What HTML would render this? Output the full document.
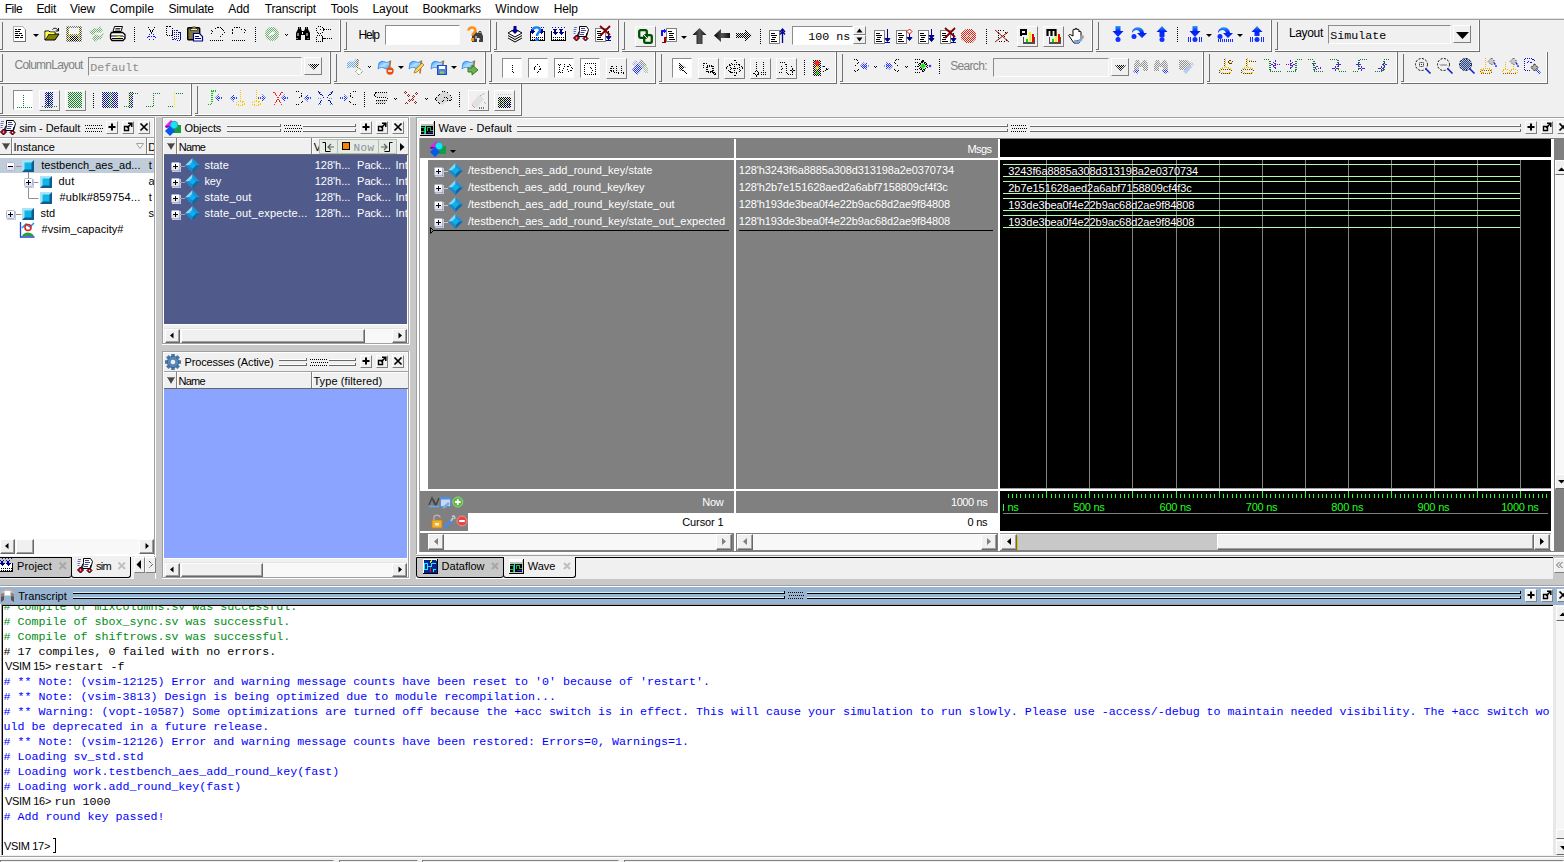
<!DOCTYPE html>
<html><head><meta charset="utf-8"><title>ModelSim</title><style>
html,body{margin:0;padding:0}
body{width:1564px;height:862px;overflow:hidden;background:#f0f0f0;position:relative;font-family:"Liberation Sans",sans-serif;font-size:11px}
.a{position:absolute;box-sizing:border-box}
.t{position:absolute;white-space:pre;line-height:1}
svg{position:absolute;overflow:visible}
</style></head><body>
<div class="a" style="left:0px;top:0px;width:1564px;height:18px;background:#fff;"></div>
<div class="a" style="left:0px;top:18px;width:1564px;height:1px;background:#e3e3e3;"></div>
<div class="a" style="left:0px;top:19px;width:1564px;height:1px;background:#a0a0a0;"></div>
<span class="t" style="left:4.8px;top:2.84px;font-size:12px;color:#000;font-family:'Liberation Sans', sans-serif;letter-spacing:-0.511px;">File</span>
<span class="t" style="left:36.4px;top:2.84px;font-size:12px;color:#000;font-family:'Liberation Sans', sans-serif;letter-spacing:-0.272px;">Edit</span>
<span class="t" style="left:70px;top:2.84px;font-size:12px;color:#000;font-family:'Liberation Sans', sans-serif;letter-spacing:-0.199px;">View</span>
<span class="t" style="left:109.7px;top:2.84px;font-size:12px;color:#000;font-family:'Liberation Sans', sans-serif;letter-spacing:0.041px;">Compile</span>
<span class="t" style="left:168.4px;top:2.84px;font-size:12px;color:#000;font-family:'Liberation Sans', sans-serif;letter-spacing:-0.148px;">Simulate</span>
<span class="t" style="left:228.3px;top:2.84px;font-size:12px;color:#000;font-family:'Liberation Sans', sans-serif;letter-spacing:-0.086px;">Add</span>
<span class="t" style="left:264.7px;top:2.84px;font-size:12px;color:#000;font-family:'Liberation Sans', sans-serif;letter-spacing:-0.171px;">Transcript</span>
<span class="t" style="left:330.7px;top:2.84px;font-size:12px;color:#000;font-family:'Liberation Sans', sans-serif;letter-spacing:-0.123px;">Tools</span>
<span class="t" style="left:372.5px;top:2.84px;font-size:12px;color:#000;font-family:'Liberation Sans', sans-serif;letter-spacing:-0.089px;">Layout</span>
<span class="t" style="left:422.4px;top:2.84px;font-size:12px;color:#000;font-family:'Liberation Sans', sans-serif;letter-spacing:-0.170px;">Bookmarks</span>
<span class="t" style="left:495.3px;top:2.84px;font-size:12px;color:#000;font-family:'Liberation Sans', sans-serif;letter-spacing:0.135px;">Window</span>
<span class="t" style="left:553.8px;top:2.84px;font-size:12px;color:#000;font-family:'Liberation Sans', sans-serif;letter-spacing:-0.197px;">Help</span>
<div class="a" style="left:339px;top:20px;width:1px;height:31px;background:#fff;"></div>
<div class="a" style="left:0px;top:50px;width:340px;height:1px;background:#fff;"></div>
<div class="a" style="left:340px;top:20px;width:1px;height:32px;background:#707070;"></div>
<div class="a" style="left:0px;top:51px;width:340px;height:1px;background:#707070;"></div>
<div class="a" style="left:2px;top:22px;width:1px;height:28px;background:#707070;"></div>
<div class="a" style="left:0px;top:49px;width:3px;height:1px;background:#707070;"></div>
<div class="a" style="left:489px;top:20px;width:1px;height:31px;background:#fff;"></div>
<div class="a" style="left:344px;top:50px;width:146px;height:1px;background:#fff;"></div>
<div class="a" style="left:490px;top:20px;width:1px;height:32px;background:#707070;"></div>
<div class="a" style="left:344px;top:51px;width:146px;height:1px;background:#707070;"></div>
<div class="a" style="left:346px;top:22px;width:1px;height:28px;background:#707070;"></div>
<div class="a" style="left:344px;top:49px;width:3px;height:1px;background:#707070;"></div>
<div class="a" style="left:617px;top:20px;width:1px;height:31px;background:#fff;"></div>
<div class="a" style="left:494px;top:50px;width:124px;height:1px;background:#fff;"></div>
<div class="a" style="left:618px;top:20px;width:1px;height:32px;background:#707070;"></div>
<div class="a" style="left:494px;top:51px;width:124px;height:1px;background:#707070;"></div>
<div class="a" style="left:496px;top:22px;width:1px;height:28px;background:#707070;"></div>
<div class="a" style="left:494px;top:49px;width:3px;height:1px;background:#707070;"></div>
<div class="a" style="left:1091px;top:20px;width:1px;height:31px;background:#fff;"></div>
<div class="a" style="left:622px;top:50px;width:470px;height:1px;background:#fff;"></div>
<div class="a" style="left:1092px;top:20px;width:1px;height:32px;background:#707070;"></div>
<div class="a" style="left:622px;top:51px;width:470px;height:1px;background:#707070;"></div>
<div class="a" style="left:624px;top:22px;width:1px;height:28px;background:#707070;"></div>
<div class="a" style="left:622px;top:49px;width:3px;height:1px;background:#707070;"></div>
<div class="a" style="left:1270px;top:20px;width:1px;height:31px;background:#fff;"></div>
<div class="a" style="left:1096px;top:50px;width:175px;height:1px;background:#fff;"></div>
<div class="a" style="left:1271px;top:20px;width:1px;height:32px;background:#707070;"></div>
<div class="a" style="left:1096px;top:51px;width:175px;height:1px;background:#707070;"></div>
<div class="a" style="left:1098px;top:22px;width:1px;height:28px;background:#707070;"></div>
<div class="a" style="left:1096px;top:49px;width:3px;height:1px;background:#707070;"></div>
<div class="a" style="left:1478px;top:20px;width:1px;height:31px;background:#fff;"></div>
<div class="a" style="left:1275px;top:50px;width:204px;height:1px;background:#fff;"></div>
<div class="a" style="left:1479px;top:20px;width:1px;height:32px;background:#707070;"></div>
<div class="a" style="left:1275px;top:51px;width:204px;height:1px;background:#707070;"></div>
<div class="a" style="left:1277px;top:22px;width:1px;height:28px;background:#707070;"></div>
<div class="a" style="left:1275px;top:49px;width:3px;height:1px;background:#707070;"></div>
<div class="a" style="left:329px;top:52px;width:1px;height:31px;background:#fff;"></div>
<div class="a" style="left:0px;top:82px;width:330px;height:1px;background:#fff;"></div>
<div class="a" style="left:330px;top:52px;width:1px;height:32px;background:#707070;"></div>
<div class="a" style="left:0px;top:83px;width:330px;height:1px;background:#707070;"></div>
<div class="a" style="left:2px;top:54px;width:1px;height:28px;background:#707070;"></div>
<div class="a" style="left:0px;top:81px;width:3px;height:1px;background:#707070;"></div>
<div class="a" style="left:484px;top:52px;width:1px;height:31px;background:#fff;"></div>
<div class="a" style="left:334px;top:82px;width:151px;height:1px;background:#fff;"></div>
<div class="a" style="left:485px;top:52px;width:1px;height:32px;background:#707070;"></div>
<div class="a" style="left:334px;top:83px;width:151px;height:1px;background:#707070;"></div>
<div class="a" style="left:336px;top:54px;width:1px;height:28px;background:#707070;"></div>
<div class="a" style="left:334px;top:81px;width:3px;height:1px;background:#707070;"></div>
<div class="a" style="left:654px;top:52px;width:1px;height:31px;background:#fff;"></div>
<div class="a" style="left:489px;top:82px;width:166px;height:1px;background:#fff;"></div>
<div class="a" style="left:655px;top:52px;width:1px;height:32px;background:#707070;"></div>
<div class="a" style="left:489px;top:83px;width:166px;height:1px;background:#707070;"></div>
<div class="a" style="left:491px;top:54px;width:1px;height:28px;background:#707070;"></div>
<div class="a" style="left:489px;top:81px;width:3px;height:1px;background:#707070;"></div>
<div class="a" style="left:835px;top:52px;width:1px;height:31px;background:#fff;"></div>
<div class="a" style="left:659px;top:82px;width:177px;height:1px;background:#fff;"></div>
<div class="a" style="left:836px;top:52px;width:1px;height:32px;background:#707070;"></div>
<div class="a" style="left:659px;top:83px;width:177px;height:1px;background:#707070;"></div>
<div class="a" style="left:661px;top:54px;width:1px;height:28px;background:#707070;"></div>
<div class="a" style="left:659px;top:81px;width:3px;height:1px;background:#707070;"></div>
<div class="a" style="left:1202px;top:52px;width:1px;height:31px;background:#fff;"></div>
<div class="a" style="left:840px;top:82px;width:363px;height:1px;background:#fff;"></div>
<div class="a" style="left:1203px;top:52px;width:1px;height:32px;background:#707070;"></div>
<div class="a" style="left:840px;top:83px;width:363px;height:1px;background:#707070;"></div>
<div class="a" style="left:842px;top:54px;width:1px;height:28px;background:#707070;"></div>
<div class="a" style="left:840px;top:81px;width:3px;height:1px;background:#707070;"></div>
<div class="a" style="left:1396px;top:52px;width:1px;height:31px;background:#fff;"></div>
<div class="a" style="left:1207px;top:82px;width:190px;height:1px;background:#fff;"></div>
<div class="a" style="left:1397px;top:52px;width:1px;height:32px;background:#707070;"></div>
<div class="a" style="left:1207px;top:83px;width:190px;height:1px;background:#707070;"></div>
<div class="a" style="left:1209px;top:54px;width:1px;height:28px;background:#707070;"></div>
<div class="a" style="left:1207px;top:81px;width:3px;height:1px;background:#707070;"></div>
<div class="a" style="left:1546px;top:52px;width:1px;height:31px;background:#fff;"></div>
<div class="a" style="left:1401px;top:82px;width:146px;height:1px;background:#fff;"></div>
<div class="a" style="left:1547px;top:52px;width:1px;height:32px;background:#707070;"></div>
<div class="a" style="left:1401px;top:83px;width:146px;height:1px;background:#707070;"></div>
<div class="a" style="left:1403px;top:54px;width:1px;height:28px;background:#707070;"></div>
<div class="a" style="left:1401px;top:81px;width:3px;height:1px;background:#707070;"></div>
<div class="a" style="left:190px;top:84px;width:1px;height:31px;background:#fff;"></div>
<div class="a" style="left:0px;top:114px;width:191px;height:1px;background:#fff;"></div>
<div class="a" style="left:191px;top:84px;width:1px;height:32px;background:#707070;"></div>
<div class="a" style="left:0px;top:115px;width:191px;height:1px;background:#707070;"></div>
<div class="a" style="left:2px;top:86px;width:1px;height:28px;background:#707070;"></div>
<div class="a" style="left:0px;top:113px;width:3px;height:1px;background:#707070;"></div>
<div class="a" style="left:520px;top:84px;width:1px;height:31px;background:#fff;"></div>
<div class="a" style="left:195px;top:114px;width:326px;height:1px;background:#fff;"></div>
<div class="a" style="left:521px;top:84px;width:1px;height:32px;background:#707070;"></div>
<div class="a" style="left:195px;top:115px;width:326px;height:1px;background:#707070;"></div>
<div class="a" style="left:197px;top:86px;width:1px;height:28px;background:#707070;"></div>
<div class="a" style="left:195px;top:113px;width:3px;height:1px;background:#707070;"></div>
<div class="a" style="left:0px;top:117px;width:1564px;height:470px;background:#c8c8c8;"></div>
<div class="a" style="left:-2px;top:117px;width:158px;height:462px;background:#f0f0f0;"></div>
<div class="a" style="left:-2px;top:117px;width:1px;height:462px;background:#a0a0a0;"></div>
<div class="a" style="left:-2px;top:117px;width:158px;height:1px;background:#a0a0a0;"></div>
<div class="a" style="left:-1px;top:118px;width:1px;height:461px;background:#fff;"></div>
<div class="a" style="left:-1px;top:118px;width:157px;height:1px;background:#fff;"></div>
<div class="a" style="left:153px;top:118px;width:1px;height:461px;background:#fff;"></div>
<div class="a" style="left:154px;top:118px;width:1px;height:461px;background:#a0a0a0;"></div>
<div class="a" style="left:155px;top:117px;width:1px;height:462px;background:#fff;"></div>
<div class="a" style="left:-1px;top:577px;width:156px;height:1px;background:#a0a0a0;"></div>
<div class="a" style="left:-2px;top:578px;width:158px;height:1px;background:#fff;"></div>
<div class="a" style="left:0px;top:138px;width:154px;height:418px;background:#fff;"></div>
<div class="a" style="left:162px;top:117px;width:248px;height:228px;background:#f0f0f0;"></div>
<div class="a" style="left:162px;top:117px;width:1px;height:228px;background:#a0a0a0;"></div>
<div class="a" style="left:162px;top:117px;width:248px;height:1px;background:#a0a0a0;"></div>
<div class="a" style="left:163px;top:118px;width:1px;height:227px;background:#fff;"></div>
<div class="a" style="left:163px;top:118px;width:247px;height:1px;background:#fff;"></div>
<div class="a" style="left:407px;top:118px;width:1px;height:227px;background:#fff;"></div>
<div class="a" style="left:408px;top:118px;width:1px;height:227px;background:#a0a0a0;"></div>
<div class="a" style="left:409px;top:117px;width:1px;height:228px;background:#fff;"></div>
<div class="a" style="left:163px;top:343px;width:246px;height:1px;background:#a0a0a0;"></div>
<div class="a" style="left:162px;top:344px;width:248px;height:1px;background:#fff;"></div>
<span class="t" style="left:184.5px;top:122.69px;font-size:11px;color:#000;font-family:'Liberation Sans', sans-serif;letter-spacing:-0.071px;">Objects</span>
<div class="a" style="left:227px;top:125px;width:54px;height:1px;background:#fff;"></div>
<div class="a" style="left:227px;top:126px;width:54px;height:1px;background:#696969;"></div>
<div class="a" style="left:227px;top:130px;width:54px;height:1px;background:#fff;"></div>
<div class="a" style="left:227px;top:131px;width:54px;height:1px;background:#696969;"></div>
<div class="a" style="left:280px;top:124px;width:1px;height:3px;background:#696969;"></div>
<div class="a" style="left:280px;top:129px;width:1px;height:3px;background:#696969;"></div>
<svg style="left:0;top:0" width="1" height="1"><rect x="284" y="125" width="1" height="1" fill="#000"/><rect x="286" y="125" width="1" height="1" fill="#000"/><rect x="288" y="125" width="1" height="1" fill="#000"/><rect x="290" y="125" width="1" height="1" fill="#000"/><rect x="292" y="125" width="1" height="1" fill="#000"/><rect x="294" y="125" width="1" height="1" fill="#000"/><rect x="296" y="125" width="1" height="1" fill="#000"/><rect x="298" y="125" width="1" height="1" fill="#000"/><rect x="300" y="125" width="1" height="1" fill="#000"/><rect x="285" y="128" width="1" height="1" fill="#000"/><rect x="287" y="128" width="1" height="1" fill="#000"/><rect x="289" y="128" width="1" height="1" fill="#000"/><rect x="291" y="128" width="1" height="1" fill="#000"/><rect x="293" y="128" width="1" height="1" fill="#000"/><rect x="295" y="128" width="1" height="1" fill="#000"/><rect x="297" y="128" width="1" height="1" fill="#000"/><rect x="299" y="128" width="1" height="1" fill="#000"/><rect x="301" y="128" width="1" height="1" fill="#000"/><rect x="284" y="131" width="1" height="1" fill="#000"/><rect x="286" y="131" width="1" height="1" fill="#000"/><rect x="288" y="131" width="1" height="1" fill="#000"/><rect x="290" y="131" width="1" height="1" fill="#000"/><rect x="292" y="131" width="1" height="1" fill="#000"/><rect x="294" y="131" width="1" height="1" fill="#000"/><rect x="296" y="131" width="1" height="1" fill="#000"/><rect x="298" y="131" width="1" height="1" fill="#000"/><rect x="300" y="131" width="1" height="1" fill="#000"/></svg>
<div class="a" style="left:303px;top:125px;width:53px;height:1px;background:#fff;"></div>
<div class="a" style="left:303px;top:126px;width:53px;height:1px;background:#696969;"></div>
<div class="a" style="left:303px;top:130px;width:53px;height:1px;background:#fff;"></div>
<div class="a" style="left:303px;top:131px;width:53px;height:1px;background:#696969;"></div>
<div class="a" style="left:355px;top:124px;width:1px;height:3px;background:#696969;"></div>
<div class="a" style="left:355px;top:129px;width:1px;height:3px;background:#696969;"></div>
<div class="a" style="left:360px;top:121px;width:12px;height:13px;background:#f0f0f0;border-top:1px solid #fff;border-left:1px solid #fff;border-right:1px solid #808080;border-bottom:1px solid #808080;"></div>
<svg style="left:360px;top:121px" width="12" height="12" viewBox="0 0 12 12"><path d="M2.5 6h7M6 2.5v7" stroke="#000" stroke-width="2" fill="none"/></svg>
<div class="a" style="left:376px;top:121px;width:12px;height:13px;background:#f0f0f0;border-top:1px solid #fff;border-left:1px solid #fff;border-right:1px solid #808080;border-bottom:1px solid #808080;"></div>
<svg style="left:376px;top:121px" width="12" height="12" viewBox="0 0 12 12"><path d="M2.5 5.5h4v4h-4z" fill="none" stroke="#000" stroke-width="1.4"/><path d="M5 7l4.5-4.5M6 2.2h3.8v3.8" fill="none" stroke="#000" stroke-width="1.5"/></svg>
<div class="a" style="left:392px;top:121px;width:12px;height:13px;background:#f0f0f0;border-top:1px solid #fff;border-left:1px solid #fff;border-right:1px solid #808080;border-bottom:1px solid #808080;"></div>
<svg style="left:392px;top:121px" width="12" height="12" viewBox="0 0 12 12"><path d="M2.5 2.5l7 7M9.5 2.5l-7 7" stroke="#000" stroke-width="1.7" fill="none"/></svg>
<div class="a" style="left:164px;top:137px;width:244px;height:1px;background:#a0a0a0;"></div>
<div class="a" style="left:164px;top:138px;width:244px;height:16px;background:#f0f0f0;border-top:1px solid #fff;"></div>
<div class="a" style="left:164px;top:154px;width:244px;height:1px;background:#696969;"></div>
<div class="a" style="left:176px;top:138px;width:1px;height:16px;background:#808080;"></div>
<div class="a" style="left:177px;top:138px;width:1px;height:16px;background:#fff;"></div>
<div class="a" style="left:311px;top:138px;width:1px;height:16px;background:#808080;"></div>
<div class="a" style="left:312px;top:138px;width:1px;height:16px;background:#fff;"></div>
<svg style="left:167px;top:143px" width="8" height="7" viewBox="0 0 8 7"><path d="M0 0h8l-4 7z" fill="#484848"/><path d="M0 .5h8" stroke="#808080"/><path d="M0 1l3.500 6" stroke="#fff" stroke-width=".6" opacity=".7"/></svg>
<span class="t" style="left:178.7px;top:141.69px;font-size:11px;color:#000;font-family:'Liberation Sans', sans-serif;letter-spacing:-0.686px;">Name</span>
<span class="t" style="left:313.7px;top:141.69px;font-size:11px;color:#000;font-family:'Liberation Sans', sans-serif;letter-spacing:-2.344px;">V</span>
<div class="a" style="left:164px;top:155px;width:243px;height:169px;background:#505b8b;"></div>
<div class="a" style="left:164px;top:324px;width:244px;height:1px;background:#fff;"></div>
<div class="a" style="left:164px;top:328px;width:243px;height:1px;background:#e4e4e4;"></div>
<div class="a" style="left:165px;top:329px;width:242px;height:14px;background:#f8f8f8;"></div>
<div class="a" style="left:165px;top:329px;width:15px;height:14px;background:#f0f0f0;border-top:1px solid #fff;border-left:1px solid #fff;border-right:1px solid #696969;border-bottom:1px solid #696969;box-shadow:inset -1px -1px 0 #a0a0a0;"></div>
<div class="a" style="left:392px;top:329px;width:15px;height:14px;background:#f0f0f0;border-top:1px solid #fff;border-left:1px solid #fff;border-right:1px solid #696969;border-bottom:1px solid #696969;box-shadow:inset -1px -1px 0 #a0a0a0;"></div>
<svg style="left:0;top:0" width="1" height="1"><path d="M173.5 332.5v6l-3.5-3z" fill="#000"/><path d="M398.5 332.5v6l3.5-3z" fill="#000"/></svg>
<div class="a" style="left:181px;top:329px;width:184px;height:14px;background:#f0f0f0;border-top:1px solid #fff;border-left:1px solid #fff;border-right:1px solid #696969;border-bottom:1px solid #696969;box-shadow:inset -1px -1px 0 #a0a0a0;"></div>
<div class="a" style="left:319px;top:139px;width:78px;height:15px;background:#e4ece4;border:1px solid #b4bcb4;"></div>
<div class="a" style="left:337px;top:140px;width:1px;height:13px;background:#b4bcb4;"></div>
<div class="a" style="left:378px;top:140px;width:1px;height:13px;background:#b4bcb4;"></div>
<div class="a" style="left:342px;top:142px;width:8px;height:8px;background:#ff8000;border:1px solid #000;"></div>
<span class="t" style="left:353.5px;top:143.14px;font-size:11px;color:#8c8ca0;font-family:'Liberation Mono', monospace;letter-spacing:0.396px;">Now</span>
<svg style="left:0;top:0" width="1" height="1"><path d="M322.5 142.5h3v9h5" fill="none" stroke="#000"/><path d="M334 147h-6M331 144l-3 3 3 3" fill="none" stroke="#606060" stroke-width="1.2"/><path d="M392.5 142.5h-3v9h-5" fill="none" stroke="#000"/><path d="M381 147h6M384 144l3 3-3 3" fill="none" stroke="#606060" stroke-width="1.2"/><path d="M400 143v8l4.5-4z" fill="#000"/></svg>
<div class="a" style="left:162px;top:351px;width:248px;height:228px;background:#f0f0f0;"></div>
<div class="a" style="left:162px;top:351px;width:1px;height:228px;background:#a0a0a0;"></div>
<div class="a" style="left:162px;top:351px;width:248px;height:1px;background:#a0a0a0;"></div>
<div class="a" style="left:163px;top:352px;width:1px;height:227px;background:#fff;"></div>
<div class="a" style="left:163px;top:352px;width:247px;height:1px;background:#fff;"></div>
<div class="a" style="left:407px;top:352px;width:1px;height:227px;background:#fff;"></div>
<div class="a" style="left:408px;top:352px;width:1px;height:227px;background:#a0a0a0;"></div>
<div class="a" style="left:409px;top:351px;width:1px;height:228px;background:#fff;"></div>
<div class="a" style="left:163px;top:577px;width:246px;height:1px;background:#a0a0a0;"></div>
<div class="a" style="left:162px;top:578px;width:248px;height:1px;background:#fff;"></div>
<span class="t" style="left:184.5px;top:356.69px;font-size:11px;color:#000;font-family:'Liberation Sans', sans-serif;letter-spacing:-0.156px;">Processes (Active)</span>
<div class="a" style="left:279px;top:359px;width:28px;height:1px;background:#fff;"></div>
<div class="a" style="left:279px;top:360px;width:28px;height:1px;background:#696969;"></div>
<div class="a" style="left:279px;top:364px;width:28px;height:1px;background:#fff;"></div>
<div class="a" style="left:279px;top:365px;width:28px;height:1px;background:#696969;"></div>
<div class="a" style="left:306px;top:358px;width:1px;height:3px;background:#696969;"></div>
<div class="a" style="left:306px;top:363px;width:1px;height:3px;background:#696969;"></div>
<svg style="left:0;top:0" width="1" height="1"><rect x="310" y="359" width="1" height="1" fill="#000"/><rect x="312" y="359" width="1" height="1" fill="#000"/><rect x="314" y="359" width="1" height="1" fill="#000"/><rect x="316" y="359" width="1" height="1" fill="#000"/><rect x="318" y="359" width="1" height="1" fill="#000"/><rect x="320" y="359" width="1" height="1" fill="#000"/><rect x="322" y="359" width="1" height="1" fill="#000"/><rect x="324" y="359" width="1" height="1" fill="#000"/><rect x="326" y="359" width="1" height="1" fill="#000"/><rect x="311" y="362" width="1" height="1" fill="#000"/><rect x="313" y="362" width="1" height="1" fill="#000"/><rect x="315" y="362" width="1" height="1" fill="#000"/><rect x="317" y="362" width="1" height="1" fill="#000"/><rect x="319" y="362" width="1" height="1" fill="#000"/><rect x="321" y="362" width="1" height="1" fill="#000"/><rect x="323" y="362" width="1" height="1" fill="#000"/><rect x="325" y="362" width="1" height="1" fill="#000"/><rect x="327" y="362" width="1" height="1" fill="#000"/><rect x="310" y="365" width="1" height="1" fill="#000"/><rect x="312" y="365" width="1" height="1" fill="#000"/><rect x="314" y="365" width="1" height="1" fill="#000"/><rect x="316" y="365" width="1" height="1" fill="#000"/><rect x="318" y="365" width="1" height="1" fill="#000"/><rect x="320" y="365" width="1" height="1" fill="#000"/><rect x="322" y="365" width="1" height="1" fill="#000"/><rect x="324" y="365" width="1" height="1" fill="#000"/><rect x="326" y="365" width="1" height="1" fill="#000"/></svg>
<div class="a" style="left:329px;top:359px;width:27px;height:1px;background:#fff;"></div>
<div class="a" style="left:329px;top:360px;width:27px;height:1px;background:#696969;"></div>
<div class="a" style="left:329px;top:364px;width:27px;height:1px;background:#fff;"></div>
<div class="a" style="left:329px;top:365px;width:27px;height:1px;background:#696969;"></div>
<div class="a" style="left:355px;top:358px;width:1px;height:3px;background:#696969;"></div>
<div class="a" style="left:355px;top:363px;width:1px;height:3px;background:#696969;"></div>
<div class="a" style="left:360px;top:355px;width:12px;height:13px;background:#f0f0f0;border-top:1px solid #fff;border-left:1px solid #fff;border-right:1px solid #808080;border-bottom:1px solid #808080;"></div>
<svg style="left:360px;top:355px" width="12" height="12" viewBox="0 0 12 12"><path d="M2.5 6h7M6 2.5v7" stroke="#000" stroke-width="2" fill="none"/></svg>
<div class="a" style="left:376px;top:355px;width:12px;height:13px;background:#f0f0f0;border-top:1px solid #fff;border-left:1px solid #fff;border-right:1px solid #808080;border-bottom:1px solid #808080;"></div>
<svg style="left:376px;top:355px" width="12" height="12" viewBox="0 0 12 12"><path d="M2.5 5.5h4v4h-4z" fill="none" stroke="#000" stroke-width="1.4"/><path d="M5 7l4.5-4.5M6 2.2h3.8v3.8" fill="none" stroke="#000" stroke-width="1.5"/></svg>
<div class="a" style="left:392px;top:355px;width:12px;height:13px;background:#f0f0f0;border-top:1px solid #fff;border-left:1px solid #fff;border-right:1px solid #808080;border-bottom:1px solid #808080;"></div>
<svg style="left:392px;top:355px" width="12" height="12" viewBox="0 0 12 12"><path d="M2.5 2.5l7 7M9.5 2.5l-7 7" stroke="#000" stroke-width="1.7" fill="none"/></svg>
<div class="a" style="left:164px;top:371px;width:244px;height:1px;background:#a0a0a0;"></div>
<div class="a" style="left:164px;top:372px;width:244px;height:16px;background:#f0f0f0;border-top:1px solid #fff;"></div>
<div class="a" style="left:164px;top:388px;width:244px;height:1px;background:#696969;"></div>
<div class="a" style="left:176px;top:372px;width:1px;height:16px;background:#808080;"></div>
<div class="a" style="left:177px;top:372px;width:1px;height:16px;background:#fff;"></div>
<div class="a" style="left:311px;top:372px;width:1px;height:16px;background:#808080;"></div>
<div class="a" style="left:312px;top:372px;width:1px;height:16px;background:#fff;"></div>
<svg style="left:167px;top:377px" width="8" height="7" viewBox="0 0 8 7"><path d="M0 0h8l-4 7z" fill="#484848"/><path d="M0 .5h8" stroke="#808080"/><path d="M0 1l3.500 6" stroke="#fff" stroke-width=".6" opacity=".7"/></svg>
<span class="t" style="left:178.4px;top:375.69px;font-size:11px;color:#000;font-family:'Liberation Sans', sans-serif;letter-spacing:-0.686px;">Name</span>
<span class="t" style="left:313.4px;top:375.69px;font-size:11px;color:#000;font-family:'Liberation Sans', sans-serif;letter-spacing:0.103px;">Type (filtered)</span>
<div class="a" style="left:164px;top:389px;width:243px;height:169px;background:#8ba4ff;"></div>
<div class="a" style="left:164px;top:558px;width:244px;height:1px;background:#fff;"></div>
<div class="a" style="left:164px;top:562px;width:243px;height:1px;background:#e4e4e4;"></div>
<div class="a" style="left:165px;top:563px;width:242px;height:14px;background:#f8f8f8;"></div>
<div class="a" style="left:165px;top:563px;width:15px;height:14px;background:#f0f0f0;border-top:1px solid #fff;border-left:1px solid #fff;border-right:1px solid #696969;border-bottom:1px solid #696969;box-shadow:inset -1px -1px 0 #a0a0a0;"></div>
<div class="a" style="left:392px;top:563px;width:15px;height:14px;background:#f0f0f0;border-top:1px solid #fff;border-left:1px solid #fff;border-right:1px solid #696969;border-bottom:1px solid #696969;box-shadow:inset -1px -1px 0 #a0a0a0;"></div>
<svg style="left:0;top:0" width="1" height="1"><path d="M173.5 566.5v6l-3.5-3z" fill="#000"/><path d="M398.5 566.5v6l3.5-3z" fill="#000"/></svg>
<div class="a" style="left:181px;top:563px;width:82px;height:14px;background:#f0f0f0;border-top:1px solid #fff;border-left:1px solid #fff;border-right:1px solid #696969;border-bottom:1px solid #696969;box-shadow:inset -1px -1px 0 #a0a0a0;"></div>
<div class="a" style="left:416px;top:117px;width:1150px;height:439px;background:#f0f0f0;border:1px solid #a0a0a0;box-shadow:inset 1px 1px 0 #fff;"></div>
<span class="t" style="left:438.4px;top:122.69px;font-size:11px;color:#000;font-family:'Liberation Sans', sans-serif;letter-spacing:0.090px;">Wave - Default</span>
<div class="a" style="left:517px;top:125px;width:491px;height:1px;background:#fff;"></div>
<div class="a" style="left:517px;top:126px;width:491px;height:1px;background:#696969;"></div>
<div class="a" style="left:517px;top:130px;width:491px;height:1px;background:#fff;"></div>
<div class="a" style="left:517px;top:131px;width:491px;height:1px;background:#696969;"></div>
<div class="a" style="left:1007px;top:124px;width:1px;height:3px;background:#696969;"></div>
<div class="a" style="left:1007px;top:129px;width:1px;height:3px;background:#696969;"></div>
<svg style="left:0;top:0" width="1" height="1"><rect x="1011" y="125" width="1" height="1" fill="#000"/><rect x="1013" y="125" width="1" height="1" fill="#000"/><rect x="1015" y="125" width="1" height="1" fill="#000"/><rect x="1017" y="125" width="1" height="1" fill="#000"/><rect x="1019" y="125" width="1" height="1" fill="#000"/><rect x="1021" y="125" width="1" height="1" fill="#000"/><rect x="1023" y="125" width="1" height="1" fill="#000"/><rect x="1025" y="125" width="1" height="1" fill="#000"/><rect x="1012" y="128" width="1" height="1" fill="#000"/><rect x="1014" y="128" width="1" height="1" fill="#000"/><rect x="1016" y="128" width="1" height="1" fill="#000"/><rect x="1018" y="128" width="1" height="1" fill="#000"/><rect x="1020" y="128" width="1" height="1" fill="#000"/><rect x="1022" y="128" width="1" height="1" fill="#000"/><rect x="1024" y="128" width="1" height="1" fill="#000"/><rect x="1026" y="128" width="1" height="1" fill="#000"/><rect x="1011" y="131" width="1" height="1" fill="#000"/><rect x="1013" y="131" width="1" height="1" fill="#000"/><rect x="1015" y="131" width="1" height="1" fill="#000"/><rect x="1017" y="131" width="1" height="1" fill="#000"/><rect x="1019" y="131" width="1" height="1" fill="#000"/><rect x="1021" y="131" width="1" height="1" fill="#000"/><rect x="1023" y="131" width="1" height="1" fill="#000"/><rect x="1025" y="131" width="1" height="1" fill="#000"/></svg>
<div class="a" style="left:1030px;top:125px;width:491px;height:1px;background:#fff;"></div>
<div class="a" style="left:1030px;top:126px;width:491px;height:1px;background:#696969;"></div>
<div class="a" style="left:1030px;top:130px;width:491px;height:1px;background:#fff;"></div>
<div class="a" style="left:1030px;top:131px;width:491px;height:1px;background:#696969;"></div>
<div class="a" style="left:1520px;top:124px;width:1px;height:3px;background:#696969;"></div>
<div class="a" style="left:1520px;top:129px;width:1px;height:3px;background:#696969;"></div>
<div class="a" style="left:1525px;top:121px;width:12px;height:13px;background:#f0f0f0;border-top:1px solid #fff;border-left:1px solid #fff;border-right:1px solid #808080;border-bottom:1px solid #808080;"></div>
<svg style="left:1525px;top:121px" width="12" height="12" viewBox="0 0 12 12"><path d="M2.5 6h7M6 2.5v7" stroke="#000" stroke-width="2" fill="none"/></svg>
<div class="a" style="left:1541px;top:121px;width:12px;height:13px;background:#f0f0f0;border-top:1px solid #fff;border-left:1px solid #fff;border-right:1px solid #808080;border-bottom:1px solid #808080;"></div>
<svg style="left:1541px;top:121px" width="12" height="12" viewBox="0 0 12 12"><path d="M2.5 5.5h4v4h-4z" fill="none" stroke="#000" stroke-width="1.4"/><path d="M5 7l4.5-4.5M6 2.2h3.8v3.8" fill="none" stroke="#000" stroke-width="1.5"/></svg>
<div class="a" style="left:1557px;top:121px;width:12px;height:13px;background:#f0f0f0;border-top:1px solid #fff;border-left:1px solid #fff;border-right:1px solid #808080;border-bottom:1px solid #808080;"></div>
<svg style="left:1557px;top:121px" width="12" height="12" viewBox="0 0 12 12"><path d="M2.5 2.5l7 7M9.5 2.5l-7 7" stroke="#000" stroke-width="1.7" fill="none"/></svg>
<div class="a" style="left:417px;top:138px;width:1147px;height:416px;background:#fff;"></div>
<div class="a" style="left:419px;top:138px;width:1145px;height:414px;background:#808080;"></div>
<div class="a" style="left:419px;top:138px;width:1px;height:414px;background:#a0a0a0;"></div>
<div class="a" style="left:420px;top:158px;width:8px;height:331px;background:#fff;"></div>
<div class="a" style="left:734px;top:139px;width:2px;height:412px;background:#fff;"></div>
<div class="a" style="left:998px;top:139px;width:2px;height:412px;background:#fff;"></div>
<div class="a" style="left:1551px;top:139px;width:3px;height:412px;background:#fff;"></div>
<div class="a" style="left:420px;top:158px;width:1131px;height:2px;background:#fff;"></div>
<div class="a" style="left:420px;top:489px;width:1131px;height:2px;background:#fff;"></div>
<div class="a" style="left:420px;top:531px;width:1131px;height:2px;background:#fff;"></div>
<div class="a" style="left:1000px;top:157px;width:551px;height:1px;background:#fff;"></div>
<div class="a" style="left:1000px;top:139px;width:551px;height:18px;background:#000;"></div>
<div class="a" style="left:1000px;top:160px;width:551px;height:329px;background:#000;"></div>
<div class="a" style="left:1000px;top:491px;width:551px;height:40px;background:#000;"></div>
<span class="t" style="left:967.5px;top:143.69px;font-size:11px;color:#fff;font-family:'Liberation Sans', sans-serif;letter-spacing:-0.620px;">Msgs</span>
<svg style="left:0;top:0" width="1" height="1"><path d="M450 150h6l-3 3z" fill="#000"/></svg>
<svg style="left:0;top:0" width="1" height="1"><path d="M435 176.5h9M443.5 168v9" stroke="#c4c8e0" fill="none"/><rect x="434.5" y="167.5" width="8" height="8" rx="1" fill="#fff" stroke="#b0b4cc"/><rect x="435" y="172" width="7" height="3" fill="#e0e4f4"/><path d="M436 171.5h5" stroke="#000" stroke-width="1"/><path d="M438.5 169v5" stroke="#000" stroke-width="1"/><path d="M443 171.5h5" stroke="#c8c8c8"/><path d="M455.5 163.0L448.0 170.5L451.975 170.5L455.5 166.975z" fill="#84d6f8"/><path d="M455.5 163.0L463.0 170.5L459.025 170.5L455.5 166.975z" fill="#1d92da"/><path d="M455.5 178.0L448.0 170.5L451.975 170.5L455.5 174.025z" fill="#1a8ad0"/><path d="M455.5 178.0L463.0 170.5L459.025 170.5L455.5 174.025z" fill="#0f6aa4"/><path d="M455.5 166.975L459.025 170.5L455.5 174.025L451.975 170.5z" fill="#00b6f2"/><path d="M435 193.5h9M443.5 185v9" stroke="#c4c8e0" fill="none"/><rect x="434.5" y="184.5" width="8" height="8" rx="1" fill="#fff" stroke="#b0b4cc"/><rect x="435" y="189" width="7" height="3" fill="#e0e4f4"/><path d="M436 188.5h5" stroke="#000" stroke-width="1"/><path d="M438.5 186v5" stroke="#000" stroke-width="1"/><path d="M443 188.5h5" stroke="#c8c8c8"/><path d="M455.5 180.0L448.0 187.5L451.975 187.5L455.5 183.975z" fill="#84d6f8"/><path d="M455.5 180.0L463.0 187.5L459.025 187.5L455.5 183.975z" fill="#1d92da"/><path d="M455.5 195.0L448.0 187.5L451.975 187.5L455.5 191.025z" fill="#1a8ad0"/><path d="M455.5 195.0L463.0 187.5L459.025 187.5L455.5 191.025z" fill="#0f6aa4"/><path d="M455.5 183.975L459.025 187.5L455.5 191.025L451.975 187.5z" fill="#00b6f2"/><path d="M435 210.5h9M443.5 202v9" stroke="#c4c8e0" fill="none"/><rect x="434.5" y="201.5" width="8" height="8" rx="1" fill="#fff" stroke="#b0b4cc"/><rect x="435" y="206" width="7" height="3" fill="#e0e4f4"/><path d="M436 205.5h5" stroke="#000" stroke-width="1"/><path d="M438.5 203v5" stroke="#000" stroke-width="1"/><path d="M443 205.5h5" stroke="#c8c8c8"/><path d="M455.5 197.0L448.0 204.5L451.975 204.5L455.5 200.975z" fill="#84d6f8"/><path d="M455.5 197.0L463.0 204.5L459.025 204.5L455.5 200.975z" fill="#1d92da"/><path d="M455.5 212.0L448.0 204.5L451.975 204.5L455.5 208.025z" fill="#1a8ad0"/><path d="M455.5 212.0L463.0 204.5L459.025 204.5L455.5 208.025z" fill="#0f6aa4"/><path d="M455.5 200.975L459.025 204.5L455.5 208.025L451.975 204.5z" fill="#00b6f2"/><path d="M435 227.5h9M443.5 219v9" stroke="#c4c8e0" fill="none"/><rect x="434.5" y="218.5" width="8" height="8" rx="1" fill="#fff" stroke="#b0b4cc"/><rect x="435" y="223" width="7" height="3" fill="#e0e4f4"/><path d="M436 222.5h5" stroke="#000" stroke-width="1"/><path d="M438.5 220v5" stroke="#000" stroke-width="1"/><path d="M443 222.5h5" stroke="#c8c8c8"/><path d="M455.5 214.0L448.0 221.5L451.975 221.5L455.5 217.975z" fill="#84d6f8"/><path d="M455.5 214.0L463.0 221.5L459.025 221.5L455.5 217.975z" fill="#1d92da"/><path d="M455.5 229.0L448.0 221.5L451.975 221.5L455.5 225.025z" fill="#1a8ad0"/><path d="M455.5 229.0L463.0 221.5L459.025 221.5L455.5 225.025z" fill="#0f6aa4"/><path d="M455.5 217.975L459.025 221.5L455.5 225.025L451.975 221.5z" fill="#00b6f2"/></svg>
<span class="t" style="left:467.9px;top:164.69px;font-size:11px;color:#fff;font-family:'Liberation Sans', sans-serif;letter-spacing:0.030px;">/testbench_aes_add_round_key/state</span>
<span class="t" style="left:738.7px;top:164.69px;font-size:11px;color:#fff;font-family:'Liberation Sans', sans-serif;letter-spacing:-0.110px;">128&#x27;h3243f6a8885a308d313198a2e0370734</span>
<span class="t" style="left:467.9px;top:181.69px;font-size:11px;color:#fff;font-family:'Liberation Sans', sans-serif;letter-spacing:-0.008px;">/testbench_aes_add_round_key/key</span>
<span class="t" style="left:738.7px;top:181.69px;font-size:11px;color:#fff;font-family:'Liberation Sans', sans-serif;letter-spacing:-0.076px;">128&#x27;h2b7e151628aed2a6abf7158809cf4f3c</span>
<span class="t" style="left:467.9px;top:198.69px;font-size:11px;color:#fff;font-family:'Liberation Sans', sans-serif;letter-spacing:0.050px;">/testbench_aes_add_round_key/state_out</span>
<span class="t" style="left:738.7px;top:198.69px;font-size:11px;color:#fff;font-family:'Liberation Sans', sans-serif;letter-spacing:-0.114px;">128&#x27;h193de3bea0f4e22b9ac68d2ae9f84808</span>
<span class="t" style="left:467.9px;top:215.69px;font-size:11px;color:#fff;font-family:'Liberation Sans', sans-serif;letter-spacing:0.037px;">/testbench_aes_add_round_key/state_out_expected</span>
<span class="t" style="left:738.7px;top:215.69px;font-size:11px;color:#fff;font-family:'Liberation Sans', sans-serif;letter-spacing:-0.114px;">128&#x27;h193de3bea0f4e22b9ac68d2ae9f84808</span>
<div class="a" style="left:431px;top:230px;width:298px;height:1px;background:#000;"></div>
<div class="a" style="left:739px;top:230px;width:254px;height:1px;background:#000;"></div>
<svg style="left:0;top:0" width="1" height="1"><path d="M430.5 227.5l3 3-3 3z" fill="#808080" stroke="#000" stroke-width="1"/></svg>
<div class="a" style="left:1046px;top:160px;width:1px;height:329px;background:#828282;"></div>
<div class="a" style="left:1089px;top:160px;width:1px;height:329px;background:#828282;"></div>
<div class="a" style="left:1132px;top:160px;width:1px;height:329px;background:#828282;"></div>
<div class="a" style="left:1176px;top:160px;width:1px;height:329px;background:#828282;"></div>
<div class="a" style="left:1219px;top:160px;width:1px;height:329px;background:#828282;"></div>
<div class="a" style="left:1262px;top:160px;width:1px;height:329px;background:#828282;"></div>
<div class="a" style="left:1305px;top:160px;width:1px;height:329px;background:#828282;"></div>
<div class="a" style="left:1348px;top:160px;width:1px;height:329px;background:#828282;"></div>
<div class="a" style="left:1391px;top:160px;width:1px;height:329px;background:#828282;"></div>
<div class="a" style="left:1434px;top:160px;width:1px;height:329px;background:#828282;"></div>
<div class="a" style="left:1477px;top:160px;width:1px;height:329px;background:#828282;"></div>
<div class="a" style="left:1520px;top:160px;width:1px;height:329px;background:#828282;"></div>
<div class="a" style="left:1003px;top:164px;width:517px;height:1px;background:#b2ffb2;"></div>
<div class="a" style="left:1003px;top:176px;width:517px;height:1px;background:#b2ffb2;"></div>
<span class="t" style="left:1008.3px;top:165.69px;font-size:11px;color:#fff;font-family:'Liberation Sans', sans-serif;letter-spacing:-0.094px;">3243f6a8885a308d313198a2e0370734</span>
<div class="a" style="left:1003px;top:181px;width:517px;height:1px;background:#b2ffb2;"></div>
<div class="a" style="left:1003px;top:193px;width:517px;height:1px;background:#b2ffb2;"></div>
<span class="t" style="left:1008.3px;top:182.69px;font-size:11px;color:#fff;font-family:'Liberation Sans', sans-serif;letter-spacing:-0.058px;">2b7e151628aed2a6abf7158809cf4f3c</span>
<div class="a" style="left:1003px;top:198px;width:517px;height:1px;background:#b2ffb2;"></div>
<div class="a" style="left:1003px;top:210px;width:517px;height:1px;background:#b2ffb2;"></div>
<span class="t" style="left:1008.3px;top:199.69px;font-size:11px;color:#fff;font-family:'Liberation Sans', sans-serif;letter-spacing:-0.092px;">193de3bea0f4e22b9ac68d2ae9f84808</span>
<div class="a" style="left:1003px;top:215px;width:517px;height:1px;background:#b2ffb2;"></div>
<div class="a" style="left:1003px;top:227px;width:517px;height:1px;background:#b2ffb2;"></div>
<span class="t" style="left:1008.3px;top:216.69px;font-size:11px;color:#fff;font-family:'Liberation Sans', sans-serif;letter-spacing:-0.092px;">193de3bea0f4e22b9ac68d2ae9f84808</span>
<div class="a" style="left:1000px;top:488px;width:551px;height:1px;background:#a0a0a0;"></div>
<span class="t" style="right:840.6px;top:496.69px;font-size:11px;color:#fff;font-family:'Liberation Sans', sans-serif;letter-spacing:-0.305px;">Now</span>
<span class="t" style="right:576.7px;top:496.69px;font-size:11px;color:#fff;font-family:'Liberation Sans', sans-serif;letter-spacing:-0.394px;">1000 ns</span>
<div class="a" style="left:468px;top:513px;width:266px;height:18px;background:#fff;"></div>
<div class="a" style="left:736px;top:513px;width:262px;height:18px;background:#fff;"></div>
<span class="t" style="right:840.6px;top:516.69px;font-size:11px;color:#000;font-family:'Liberation Sans', sans-serif;letter-spacing:-0.136px;">Cursor 1</span>
<span class="t" style="right:576.7px;top:516.69px;font-size:11px;color:#000;font-family:'Liberation Sans', sans-serif;letter-spacing:-0.224px;">0 ns</span>
<svg style="left:0;top:0" width="1" height="1"><rect x="1008" y="494" width="1" height="4" fill="#22ff22"/><rect x="1012" y="494" width="1" height="4" fill="#22ff22"/><rect x="1016" y="494" width="1" height="4" fill="#22ff22"/><rect x="1020" y="494" width="1" height="4" fill="#22ff22"/><rect x="1025" y="494" width="1" height="4" fill="#22ff22"/><rect x="1029" y="494" width="1" height="4" fill="#22ff22"/><rect x="1033" y="494" width="1" height="4" fill="#22ff22"/><rect x="1038" y="494" width="1" height="4" fill="#22ff22"/><rect x="1042" y="494" width="1" height="4" fill="#22ff22"/><rect x="1046" y="491" width="1" height="7" fill="#22ff22"/><rect x="1051" y="494" width="1" height="4" fill="#22ff22"/><rect x="1055" y="494" width="1" height="4" fill="#22ff22"/><rect x="1059" y="494" width="1" height="4" fill="#22ff22"/><rect x="1064" y="494" width="1" height="4" fill="#22ff22"/><rect x="1068" y="494" width="1" height="4" fill="#22ff22"/><rect x="1072" y="494" width="1" height="4" fill="#22ff22"/><rect x="1076" y="494" width="1" height="4" fill="#22ff22"/><rect x="1081" y="494" width="1" height="4" fill="#22ff22"/><rect x="1085" y="494" width="1" height="4" fill="#22ff22"/><rect x="1089" y="491" width="1" height="7" fill="#22ff22"/><rect x="1094" y="494" width="1" height="4" fill="#22ff22"/><rect x="1098" y="494" width="1" height="4" fill="#22ff22"/><rect x="1102" y="494" width="1" height="4" fill="#22ff22"/><rect x="1107" y="494" width="1" height="4" fill="#22ff22"/><rect x="1111" y="494" width="1" height="4" fill="#22ff22"/><rect x="1115" y="494" width="1" height="4" fill="#22ff22"/><rect x="1120" y="494" width="1" height="4" fill="#22ff22"/><rect x="1124" y="494" width="1" height="4" fill="#22ff22"/><rect x="1128" y="494" width="1" height="4" fill="#22ff22"/><rect x="1132" y="491" width="1" height="7" fill="#22ff22"/><rect x="1137" y="494" width="1" height="4" fill="#22ff22"/><rect x="1141" y="494" width="1" height="4" fill="#22ff22"/><rect x="1145" y="494" width="1" height="4" fill="#22ff22"/><rect x="1150" y="494" width="1" height="4" fill="#22ff22"/><rect x="1154" y="494" width="1" height="4" fill="#22ff22"/><rect x="1158" y="494" width="1" height="4" fill="#22ff22"/><rect x="1163" y="494" width="1" height="4" fill="#22ff22"/><rect x="1167" y="494" width="1" height="4" fill="#22ff22"/><rect x="1171" y="494" width="1" height="4" fill="#22ff22"/><rect x="1176" y="491" width="1" height="7" fill="#22ff22"/><rect x="1180" y="494" width="1" height="4" fill="#22ff22"/><rect x="1184" y="494" width="1" height="4" fill="#22ff22"/><rect x="1189" y="494" width="1" height="4" fill="#22ff22"/><rect x="1193" y="494" width="1" height="4" fill="#22ff22"/><rect x="1197" y="494" width="1" height="4" fill="#22ff22"/><rect x="1201" y="494" width="1" height="4" fill="#22ff22"/><rect x="1206" y="494" width="1" height="4" fill="#22ff22"/><rect x="1210" y="494" width="1" height="4" fill="#22ff22"/><rect x="1214" y="494" width="1" height="4" fill="#22ff22"/><rect x="1219" y="491" width="1" height="7" fill="#22ff22"/><rect x="1223" y="494" width="1" height="4" fill="#22ff22"/><rect x="1227" y="494" width="1" height="4" fill="#22ff22"/><rect x="1232" y="494" width="1" height="4" fill="#22ff22"/><rect x="1236" y="494" width="1" height="4" fill="#22ff22"/><rect x="1240" y="494" width="1" height="4" fill="#22ff22"/><rect x="1245" y="494" width="1" height="4" fill="#22ff22"/><rect x="1249" y="494" width="1" height="4" fill="#22ff22"/><rect x="1253" y="494" width="1" height="4" fill="#22ff22"/><rect x="1257" y="494" width="1" height="4" fill="#22ff22"/><rect x="1262" y="491" width="1" height="7" fill="#22ff22"/><rect x="1266" y="494" width="1" height="4" fill="#22ff22"/><rect x="1270" y="494" width="1" height="4" fill="#22ff22"/><rect x="1275" y="494" width="1" height="4" fill="#22ff22"/><rect x="1279" y="494" width="1" height="4" fill="#22ff22"/><rect x="1283" y="494" width="1" height="4" fill="#22ff22"/><rect x="1288" y="494" width="1" height="4" fill="#22ff22"/><rect x="1292" y="494" width="1" height="4" fill="#22ff22"/><rect x="1296" y="494" width="1" height="4" fill="#22ff22"/><rect x="1301" y="494" width="1" height="4" fill="#22ff22"/><rect x="1305" y="491" width="1" height="7" fill="#22ff22"/><rect x="1309" y="494" width="1" height="4" fill="#22ff22"/><rect x="1313" y="494" width="1" height="4" fill="#22ff22"/><rect x="1318" y="494" width="1" height="4" fill="#22ff22"/><rect x="1322" y="494" width="1" height="4" fill="#22ff22"/><rect x="1326" y="494" width="1" height="4" fill="#22ff22"/><rect x="1331" y="494" width="1" height="4" fill="#22ff22"/><rect x="1335" y="494" width="1" height="4" fill="#22ff22"/><rect x="1339" y="494" width="1" height="4" fill="#22ff22"/><rect x="1344" y="494" width="1" height="4" fill="#22ff22"/><rect x="1348" y="491" width="1" height="7" fill="#22ff22"/><rect x="1352" y="494" width="1" height="4" fill="#22ff22"/><rect x="1357" y="494" width="1" height="4" fill="#22ff22"/><rect x="1361" y="494" width="1" height="4" fill="#22ff22"/><rect x="1365" y="494" width="1" height="4" fill="#22ff22"/><rect x="1369" y="494" width="1" height="4" fill="#22ff22"/><rect x="1374" y="494" width="1" height="4" fill="#22ff22"/><rect x="1378" y="494" width="1" height="4" fill="#22ff22"/><rect x="1382" y="494" width="1" height="4" fill="#22ff22"/><rect x="1387" y="494" width="1" height="4" fill="#22ff22"/><rect x="1391" y="491" width="1" height="7" fill="#22ff22"/><rect x="1395" y="494" width="1" height="4" fill="#22ff22"/><rect x="1400" y="494" width="1" height="4" fill="#22ff22"/><rect x="1404" y="494" width="1" height="4" fill="#22ff22"/><rect x="1408" y="494" width="1" height="4" fill="#22ff22"/><rect x="1413" y="494" width="1" height="4" fill="#22ff22"/><rect x="1417" y="494" width="1" height="4" fill="#22ff22"/><rect x="1421" y="494" width="1" height="4" fill="#22ff22"/><rect x="1426" y="494" width="1" height="4" fill="#22ff22"/><rect x="1430" y="494" width="1" height="4" fill="#22ff22"/><rect x="1434" y="491" width="1" height="7" fill="#22ff22"/><rect x="1438" y="494" width="1" height="4" fill="#22ff22"/><rect x="1443" y="494" width="1" height="4" fill="#22ff22"/><rect x="1447" y="494" width="1" height="4" fill="#22ff22"/><rect x="1451" y="494" width="1" height="4" fill="#22ff22"/><rect x="1456" y="494" width="1" height="4" fill="#22ff22"/><rect x="1460" y="494" width="1" height="4" fill="#22ff22"/><rect x="1464" y="494" width="1" height="4" fill="#22ff22"/><rect x="1469" y="494" width="1" height="4" fill="#22ff22"/><rect x="1473" y="494" width="1" height="4" fill="#22ff22"/><rect x="1477" y="491" width="1" height="7" fill="#22ff22"/><rect x="1482" y="494" width="1" height="4" fill="#22ff22"/><rect x="1486" y="494" width="1" height="4" fill="#22ff22"/><rect x="1490" y="494" width="1" height="4" fill="#22ff22"/><rect x="1494" y="494" width="1" height="4" fill="#22ff22"/><rect x="1499" y="494" width="1" height="4" fill="#22ff22"/><rect x="1503" y="494" width="1" height="4" fill="#22ff22"/><rect x="1507" y="494" width="1" height="4" fill="#22ff22"/><rect x="1512" y="494" width="1" height="4" fill="#22ff22"/><rect x="1516" y="494" width="1" height="4" fill="#22ff22"/><rect x="1520" y="491" width="1" height="7" fill="#22ff22"/><rect x="1525" y="494" width="1" height="4" fill="#22ff22"/><rect x="1529" y="494" width="1" height="4" fill="#22ff22"/><rect x="1533" y="494" width="1" height="4" fill="#22ff22"/><rect x="1538" y="494" width="1" height="4" fill="#22ff22"/><rect x="1542" y="494" width="1" height="4" fill="#22ff22"/><rect x="1546" y="494" width="1" height="4" fill="#22ff22"/></svg>
<span class="t" style="left:1073.2px;top:501.69px;font-size:11px;color:#22ff22;font-family:'Liberation Sans', sans-serif;letter-spacing:-0.305px;">500 ns</span>
<span class="t" style="left:1159.5px;top:501.69px;font-size:11px;color:#22ff22;font-family:'Liberation Sans', sans-serif;letter-spacing:-0.239px;">600 ns</span>
<span class="t" style="left:1245.8px;top:501.69px;font-size:11px;color:#22ff22;font-family:'Liberation Sans', sans-serif;letter-spacing:-0.255px;">700 ns</span>
<span class="t" style="left:1331.3px;top:501.69px;font-size:11px;color:#22ff22;font-family:'Liberation Sans', sans-serif;letter-spacing:-0.189px;">800 ns</span>
<span class="t" style="left:1417.5px;top:501.69px;font-size:11px;color:#22ff22;font-family:'Liberation Sans', sans-serif;letter-spacing:-0.189px;">900 ns</span>
<span class="t" style="left:1501.2px;top:501.69px;font-size:11px;color:#22ff22;font-family:'Liberation Sans', sans-serif;letter-spacing:-0.251px;">1000 ns</span>
<span class="t" style="left:1007.6px;top:501.69px;font-size:11px;color:#22ff22;font-family:'Liberation Sans', sans-serif;letter-spacing:-0.463px;">ns</span>
<div class="a" style="left:1003px;top:504px;width:1px;height:7px;background:#22ff22;"></div>
<div class="a" style="left:1003px;top:513px;width:545px;height:1px;background:#808080;"></div>
<div class="a" style="left:1000px;top:533px;width:551px;height:1px;background:#a0a0a0;"></div>
<div class="a" style="left:428px;top:534px;width:304px;height:16px;background:#f8f8f8;"></div>
<div class="a" style="left:428px;top:534px;width:16px;height:16px;background:#f0f0f0;border-top:1px solid #fff;border-left:1px solid #fff;border-right:1px solid #696969;border-bottom:1px solid #696969;box-shadow:inset -1px -1px 0 #a0a0a0;"></div>
<div class="a" style="left:716px;top:534px;width:16px;height:16px;background:#f0f0f0;border-top:1px solid #fff;border-left:1px solid #fff;border-right:1px solid #696969;border-bottom:1px solid #696969;box-shadow:inset -1px -1px 0 #a0a0a0;"></div>
<svg style="left:0;top:0" width="1" height="1"><path d="M438 538.0v7l-4-3.5z" fill="#808080"/><path d="M722 538.0v7l4-3.5z" fill="#808080"/></svg>
<div class="a" style="left:737px;top:534px;width:260px;height:16px;background:#f8f8f8;"></div>
<div class="a" style="left:737px;top:534px;width:16px;height:16px;background:#f0f0f0;border-top:1px solid #fff;border-left:1px solid #fff;border-right:1px solid #696969;border-bottom:1px solid #696969;box-shadow:inset -1px -1px 0 #a0a0a0;"></div>
<div class="a" style="left:981px;top:534px;width:16px;height:16px;background:#f0f0f0;border-top:1px solid #fff;border-left:1px solid #fff;border-right:1px solid #696969;border-bottom:1px solid #696969;box-shadow:inset -1px -1px 0 #a0a0a0;"></div>
<svg style="left:0;top:0" width="1" height="1"><path d="M747 538.0v7l-4-3.5z" fill="#808080"/><path d="M987 538.0v7l4-3.5z" fill="#808080"/></svg>
<div class="a" style="left:1000px;top:534px;width:551px;height:16px;background:#f0f0f0;"></div>
<div class="a" style="left:1001px;top:534px;width:549px;height:16px;background:#c8c8c8;"></div>
<div class="a" style="left:1001px;top:534px;width:16px;height:16px;background:#f0f0f0;border-top:1px solid #fff;border-left:1px solid #fff;border-right:1px solid #696969;border-bottom:1px solid #696969;box-shadow:inset -1px -1px 0 #a0a0a0;"></div>
<div class="a" style="left:1534px;top:534px;width:16px;height:16px;background:#f0f0f0;border-top:1px solid #fff;border-left:1px solid #fff;border-right:1px solid #696969;border-bottom:1px solid #696969;box-shadow:inset -1px -1px 0 #a0a0a0;"></div>
<svg style="left:0;top:0" width="1" height="1"><path d="M1011 538.0v7l-4-3.5z" fill="#000"/><path d="M1540 538.0v7l4-3.5z" fill="#000"/></svg>
<div class="a" style="left:1217px;top:534px;width:317px;height:16px;background:#f0f0f0;border-top:1px solid #fff;border-left:1px solid #fff;border-right:1px solid #696969;border-bottom:1px solid #696969;box-shadow:inset -1px -1px 0 #a0a0a0;"></div>
<div class="a" style="left:1017px;top:536px;width:1px;height:14px;background:#f0c000;"></div>
<div class="a" style="left:1554px;top:138px;width:10px;height:414px;background:#808080;"></div>
<div class="a" style="left:1555px;top:160px;width:9px;height:329px;background:#f8f8f8;"></div>
<div class="a" style="left:1555px;top:160px;width:12px;height:15px;background:#f0f0f0;border-top:1px solid #fff;border-left:1px solid #fff;border-bottom:1px solid #696969;"></div>
<div class="a" style="left:1555px;top:474px;width:12px;height:15px;background:#f0f0f0;border-top:1px solid #fff;border-left:1px solid #fff;border-bottom:1px solid #696969;"></div>
<svg style="left:0;top:0" width="1" height="1"><path d="M1558 171h7l-3.500-3.500z" fill="#000"/><path d="M1558 480h7l-3.500 3.500z" fill="#000"/></svg>
<div class="a" style="left:416px;top:554px;width:1150px;height:25px;background:#f0f0f0;"></div>
<div class="a" style="left:416px;top:555px;width:1150px;height:1px;background:#a0a0a0;"></div>
<div class="a" style="left:416px;top:578px;width:160px;height:1px;background:#fff;"></div>
<div class="a" style="left:416px;top:557px;width:88px;height:21px;background:#c8c8c8;border:1px solid #000;border-radius:0 0 3px 3px;"></div>
<div class="a" style="left:503px;top:557px;width:73px;height:21px;background:#f0f0f0;border:1px solid #000;border-top:none;border-radius:0 0 3px 3px;"></div>
<div class="a" style="left:576px;top:557px;width:977px;height:1px;background:#000;"></div>
<div class="a" style="left:1553px;top:556px;width:11px;height:23px;background:#c8c8c8;"></div>
<div class="a" style="left:1554px;top:558px;width:10px;height:15px;background:#f0f0f0;border-top:1px solid #fff;border-left:1px solid #fff;border-bottom:1px solid #808080;"></div>
<svg style="left:0;top:0" width="1" height="1"><path d="M1559.500 562l-3 3 3 3M1562.500 562l-3 3 3 3" fill="none" stroke="#404040" stroke-width=".8"/></svg>
<span class="t" style="left:441.6px;top:560.69px;font-size:11px;color:#000;font-family:'Liberation Sans', sans-serif;letter-spacing:0.025px;">Dataflow</span>
<span class="t" style="left:527.8px;top:560.69px;font-size:11px;color:#000;font-family:'Liberation Sans', sans-serif;letter-spacing:-0.055px;">Wave</span>
<svg style="left:0;top:0" width="1" height="1"><path d="M492 563l6 6M498 563l-6 6" stroke="#a8a8a8" stroke-width="2.200"/><path d="M564 563l6 6M570 563l-6 6" stroke="#c0c0c0" stroke-width="2.200"/></svg>
<div class="a" style="left:0px;top:585px;width:1564px;height:1px;background:#a0a0a0;"></div>
<div class="a" style="left:0px;top:586px;width:1564px;height:1px;background:#fff;"></div>
<div class="a" style="left:0px;top:587px;width:1564px;height:18px;background:#99b4d1;"></div>
<span class="t" style="left:18.3px;top:590.69px;font-size:11px;color:#000;font-family:'Liberation Sans', sans-serif;letter-spacing:0.000px;">Transcript</span>
<div class="a" style="left:73px;top:592px;width:712px;height:1px;background:#c8f0ff;"></div>
<div class="a" style="left:73px;top:593px;width:712px;height:1px;background:#000;"></div>
<div class="a" style="left:73px;top:597px;width:712px;height:1px;background:#c8f0ff;"></div>
<div class="a" style="left:73px;top:598px;width:712px;height:1px;background:#000;"></div>
<div class="a" style="left:784px;top:591px;width:1px;height:3px;background:#000;"></div>
<div class="a" style="left:784px;top:596px;width:1px;height:3px;background:#000;"></div>
<svg style="left:0;top:0" width="1" height="1"><rect x="788" y="592" width="1" height="1" fill="#000"/><rect x="790" y="592" width="1" height="1" fill="#000"/><rect x="792" y="592" width="1" height="1" fill="#000"/><rect x="794" y="592" width="1" height="1" fill="#000"/><rect x="796" y="592" width="1" height="1" fill="#000"/><rect x="798" y="592" width="1" height="1" fill="#000"/><rect x="800" y="592" width="1" height="1" fill="#000"/><rect x="802" y="592" width="1" height="1" fill="#000"/><rect x="789" y="595" width="1" height="1" fill="#000"/><rect x="791" y="595" width="1" height="1" fill="#000"/><rect x="793" y="595" width="1" height="1" fill="#000"/><rect x="795" y="595" width="1" height="1" fill="#000"/><rect x="797" y="595" width="1" height="1" fill="#000"/><rect x="799" y="595" width="1" height="1" fill="#000"/><rect x="801" y="595" width="1" height="1" fill="#000"/><rect x="803" y="595" width="1" height="1" fill="#000"/><rect x="788" y="598" width="1" height="1" fill="#000"/><rect x="790" y="598" width="1" height="1" fill="#000"/><rect x="792" y="598" width="1" height="1" fill="#000"/><rect x="794" y="598" width="1" height="1" fill="#000"/><rect x="796" y="598" width="1" height="1" fill="#000"/><rect x="798" y="598" width="1" height="1" fill="#000"/><rect x="800" y="598" width="1" height="1" fill="#000"/><rect x="802" y="598" width="1" height="1" fill="#000"/></svg>
<div class="a" style="left:807px;top:592px;width:714px;height:1px;background:#c8f0ff;"></div>
<div class="a" style="left:807px;top:593px;width:714px;height:1px;background:#000;"></div>
<div class="a" style="left:807px;top:597px;width:714px;height:1px;background:#c8f0ff;"></div>
<div class="a" style="left:807px;top:598px;width:714px;height:1px;background:#000;"></div>
<div class="a" style="left:1520px;top:591px;width:1px;height:3px;background:#000;"></div>
<div class="a" style="left:1520px;top:596px;width:1px;height:3px;background:#000;"></div>
<div class="a" style="left:1525px;top:589px;width:12px;height:13px;background:#f0f0f0;border-top:1px solid #fff;border-left:1px solid #fff;border-right:1px solid #808080;border-bottom:1px solid #808080;"></div>
<svg style="left:1525px;top:589px" width="12" height="12" viewBox="0 0 12 12"><path d="M2.5 6h7M6 2.5v7" stroke="#000" stroke-width="2" fill="none"/></svg>
<div class="a" style="left:1541px;top:589px;width:12px;height:13px;background:#f0f0f0;border-top:1px solid #fff;border-left:1px solid #fff;border-right:1px solid #808080;border-bottom:1px solid #808080;"></div>
<svg style="left:1541px;top:589px" width="12" height="12" viewBox="0 0 12 12"><path d="M2.5 5.5h4v4h-4z" fill="none" stroke="#000" stroke-width="1.4"/><path d="M5 7l4.5-4.5M6 2.2h3.8v3.8" fill="none" stroke="#000" stroke-width="1.5"/></svg>
<div class="a" style="left:1557px;top:589px;width:12px;height:13px;background:#f0f0f0;border-top:1px solid #fff;border-left:1px solid #fff;border-right:1px solid #808080;border-bottom:1px solid #808080;"></div>
<svg style="left:1557px;top:589px" width="12" height="12" viewBox="0 0 12 12"><path d="M2.5 2.5l7 7M9.5 2.5l-7 7" stroke="#000" stroke-width="1.7" fill="none"/></svg>
<div class="a" style="left:0px;top:604px;width:1553px;height:251px;background:#fff;"></div>
<div class="a" style="left:1px;top:604px;width:1552px;height:1px;background:#a0a0a0;"></div>
<div class="a" style="left:1px;top:604px;width:1px;height:251px;background:#a0a0a0;"></div>
<div class="a" style="left:2px;top:605px;width:1551px;height:1px;background:#000;"></div>
<div class="a" style="left:2px;top:605px;width:1px;height:250px;background:#000;"></div>
<div class="a" style="left:1553px;top:606px;width:11px;height:250px;background:#f6f6f6;"></div>
<div class="a" style="left:1553px;top:606px;width:3px;height:250px;background:#e8e8e8;"></div>
<div class="a" style="left:1556px;top:606px;width:10px;height:15px;background:#f0f0f0;border-top:1px solid #fff;border-left:1px solid #fff;border-bottom:1px solid #696969;"></div>
<div class="a" style="left:1556px;top:840px;width:10px;height:15px;background:#f0f0f0;border-top:1px solid #fff;border-left:1px solid #fff;border-bottom:1px solid #696969;"></div>
<div class="a" style="left:1556px;top:829px;width:10px;height:10px;background:#f0f0f0;border-top:1px solid #fff;border-left:1px solid #fff;border-bottom:1px solid #696969;"></div>
<svg style="left:0;top:0" width="1" height="1"><path d="M1559.500 616h7l-3.500-3.500z" fill="#000"/><path d="M1560 846h8l-4 4z" fill="#000"/></svg>
<div class="a" style="left:2px;top:606px;width:1550px;height:249px;overflow:hidden">
<span class="t" style="left:1.5px;top:-4.33px;font-size:11.667px;color:#008c14;font-family:'Liberation Mono', monospace;"># Compile of mixcolumns.sv was successful.</span>
<span class="t" style="left:1.5px;top:10.67px;font-size:11.667px;color:#008c14;font-family:'Liberation Mono', monospace;"># Compile of sbox_sync.sv was successful.</span>
<span class="t" style="left:1.5px;top:25.67px;font-size:11.667px;color:#008c14;font-family:'Liberation Mono', monospace;"># Compile of shiftrows.sv was successful.</span>
<span class="t" style="left:1.5px;top:40.67px;font-size:11.667px;color:#000;font-family:'Liberation Mono', monospace;"># 17 compiles, 0 failed with no errors.</span>
<span class="t" style="left:1.5px;top:70.67px;font-size:11.667px;color:#0000ff;font-family:'Liberation Mono', monospace;"># ** Note: (vsim-12125) Error and warning message counts have been reset to &#x27;0&#x27; because of &#x27;restart&#x27;.</span>
<span class="t" style="left:1.5px;top:85.67px;font-size:11.667px;color:#0000ff;font-family:'Liberation Mono', monospace;"># ** Note: (vsim-3813) Design is being optimized due to module recompilation...</span>
<span class="t" style="left:1.5px;top:100.67px;font-size:11.667px;color:#0000ff;font-family:'Liberation Mono', monospace;"># ** Warning: (vopt-10587) Some optimizations are turned off because the +acc switch is in effect. This will cause your simulation to run slowly. Please use -access/-debug to maintain needed visibility. The +acc switch wo</span>
<span class="t" style="left:1.5px;top:115.67px;font-size:11.667px;color:#0000ff;font-family:'Liberation Mono', monospace;">uld be deprecated in a future release.</span>
<span class="t" style="left:1.5px;top:130.67px;font-size:11.667px;color:#0000ff;font-family:'Liberation Mono', monospace;"># ** Note: (vsim-12126) Error and warning message counts have been restored: Errors=0, Warnings=1.</span>
<span class="t" style="left:1.5px;top:145.67px;font-size:11.667px;color:#0000ff;font-family:'Liberation Mono', monospace;"># Loading sv_std.std</span>
<span class="t" style="left:1.5px;top:160.67px;font-size:11.667px;color:#0000ff;font-family:'Liberation Mono', monospace;"># Loading work.testbench_aes_add_round_key(fast)</span>
<span class="t" style="left:1.5px;top:175.67px;font-size:11.667px;color:#0000ff;font-family:'Liberation Mono', monospace;"># Loading work.add_round_key(fast)</span>
<span class="t" style="left:1.5px;top:205.67px;font-size:11.667px;color:#0000ff;font-family:'Liberation Mono', monospace;"># Add round key passed!</span>
<span class="t" style="left:3px;top:54.69px;font-size:11px;color:#000;font-family:'Liberation Sans', sans-serif;letter-spacing:-0.326px;">VSIM 15&gt;</span>
<span class="t" style="left:52.5px;top:55.67px;font-size:11.667px;color:#000;font-family:'Liberation Mono', monospace;">restart -f</span>
<span class="t" style="left:3px;top:189.69px;font-size:11px;color:#000;font-family:'Liberation Sans', sans-serif;letter-spacing:-0.326px;">VSIM 16&gt;</span>
<span class="t" style="left:52.5px;top:190.67px;font-size:11.667px;color:#000;font-family:'Liberation Mono', monospace;">run 1000</span>
<span class="t" style="left:2px;top:234.69px;font-size:11px;color:#000;font-family:'Liberation Sans', sans-serif;letter-spacing:-0.326px;">VSIM 17&gt;</span>
</div>
<div class="a" style="left:55px;top:838px;width:1px;height:15px;background:#000;"></div>
<div class="a" style="left:53px;top:838px;width:2px;height:1px;background:#000;"></div>
<div class="a" style="left:53px;top:852px;width:2px;height:1px;background:#000;"></div>
<div class="a" style="left:0px;top:855px;width:1564px;height:7px;background:#f0f0f0;"></div>
<div class="a" style="left:0px;top:856px;width:1564px;height:1px;background:#a0a0a0;"></div>
<div class="a" style="left:0px;top:857px;width:1564px;height:1px;background:#fff;"></div>
<div class="a" style="left:0px;top:860px;width:334px;height:3px;background:#f0f0f0;border-top:1px solid #808080;border-left:1px solid #808080;border-right:1px solid #fff;"></div>
<div class="a" style="left:339px;top:860px;width:79px;height:3px;background:#f0f0f0;border-top:1px solid #808080;border-left:1px solid #808080;border-right:1px solid #fff;"></div>
<div class="a" style="left:422px;top:860px;width:197px;height:3px;background:#f0f0f0;border-top:1px solid #808080;border-left:1px solid #808080;border-right:1px solid #fff;"></div>
<div class="a" style="left:624px;top:860px;width:940px;height:3px;background:#f0f0f0;border-top:1px solid #808080;border-left:1px solid #808080;border-right:1px solid #fff;"></div>
<span class="t" style="left:19.2px;top:122.69px;font-size:11px;color:#000;font-family:'Liberation Sans', sans-serif;letter-spacing:-0.058px;">sim - Default</span>
<svg style="left:0;top:0" width="1" height="1"><rect x="85" y="125" width="1" height="1" fill="#000"/><rect x="87" y="125" width="1" height="1" fill="#000"/><rect x="89" y="125" width="1" height="1" fill="#000"/><rect x="91" y="125" width="1" height="1" fill="#000"/><rect x="93" y="125" width="1" height="1" fill="#000"/><rect x="95" y="125" width="1" height="1" fill="#000"/><rect x="97" y="125" width="1" height="1" fill="#000"/><rect x="99" y="125" width="1" height="1" fill="#000"/><rect x="101" y="125" width="1" height="1" fill="#000"/><rect x="86" y="128" width="1" height="1" fill="#000"/><rect x="88" y="128" width="1" height="1" fill="#000"/><rect x="90" y="128" width="1" height="1" fill="#000"/><rect x="92" y="128" width="1" height="1" fill="#000"/><rect x="94" y="128" width="1" height="1" fill="#000"/><rect x="96" y="128" width="1" height="1" fill="#000"/><rect x="98" y="128" width="1" height="1" fill="#000"/><rect x="100" y="128" width="1" height="1" fill="#000"/><rect x="102" y="128" width="1" height="1" fill="#000"/><rect x="85" y="131" width="1" height="1" fill="#000"/><rect x="87" y="131" width="1" height="1" fill="#000"/><rect x="89" y="131" width="1" height="1" fill="#000"/><rect x="91" y="131" width="1" height="1" fill="#000"/><rect x="93" y="131" width="1" height="1" fill="#000"/><rect x="95" y="131" width="1" height="1" fill="#000"/><rect x="97" y="131" width="1" height="1" fill="#000"/><rect x="99" y="131" width="1" height="1" fill="#000"/><rect x="101" y="131" width="1" height="1" fill="#000"/></svg>
<div class="a" style="left:106px;top:121px;width:12px;height:13px;background:#f0f0f0;border-top:1px solid #fff;border-left:1px solid #fff;border-right:1px solid #808080;border-bottom:1px solid #808080;"></div>
<svg style="left:106px;top:121px" width="12" height="12" viewBox="0 0 12 12"><path d="M2.5 6h7M6 2.5v7" stroke="#000" stroke-width="2" fill="none"/></svg>
<div class="a" style="left:122px;top:121px;width:12px;height:13px;background:#f0f0f0;border-top:1px solid #fff;border-left:1px solid #fff;border-right:1px solid #808080;border-bottom:1px solid #808080;"></div>
<svg style="left:122px;top:121px" width="12" height="12" viewBox="0 0 12 12"><path d="M2.5 5.5h4v4h-4z" fill="none" stroke="#000" stroke-width="1.4"/><path d="M5 7l4.5-4.5M6 2.2h3.8v3.8" fill="none" stroke="#000" stroke-width="1.5"/></svg>
<div class="a" style="left:138px;top:121px;width:12px;height:13px;background:#f0f0f0;border-top:1px solid #fff;border-left:1px solid #fff;border-right:1px solid #808080;border-bottom:1px solid #808080;"></div>
<svg style="left:138px;top:121px" width="12" height="12" viewBox="0 0 12 12"><path d="M2.5 2.5l7 7M9.5 2.5l-7 7" stroke="#000" stroke-width="1.7" fill="none"/></svg>
<div class="a" style="left:0px;top:137px;width:154px;height:1px;background:#a0a0a0;"></div>
<div class="a" style="left:-1px;top:138px;width:155px;height:16px;background:#f0f0f0;border-top:1px solid #fff;"></div>
<div class="a" style="left:-1px;top:154px;width:155px;height:1px;background:#696969;"></div>
<div class="a" style="left:11px;top:138px;width:1px;height:16px;background:#808080;"></div>
<div class="a" style="left:12px;top:138px;width:1px;height:16px;background:#fff;"></div>
<div class="a" style="left:146px;top:138px;width:1px;height:16px;background:#808080;"></div>
<div class="a" style="left:147px;top:138px;width:1px;height:16px;background:#fff;"></div>
<svg style="left:2px;top:143px" width="8" height="7" viewBox="0 0 8 7"><path d="M0 0h8l-4 7z" fill="#484848"/><path d="M0 .5h8" stroke="#808080"/><path d="M0 1l3.500 6" stroke="#fff" stroke-width=".6" opacity=".7"/></svg>
<span class="t" style="left:13.6px;top:141.69px;font-size:11px;color:#000;font-family:'Liberation Sans', sans-serif;letter-spacing:-0.049px;">Instance</span>
<div class="a" style="left:148px;top:138px;width:6px;height:16px;overflow:hidden">
<span class="t" style="left:0.3px;top:3.69px;font-size:11px;color:#000;font-family:'Liberation Sans', sans-serif;">D</span>
</div>
<svg style="left:0;top:0" width="1" height="1"><path d="M136.5 143.5h7l-3.5 5z" fill="#f8f8f8" stroke="#a0a0a0"/></svg>
<div class="a" style="left:0px;top:158px;width:154px;height:15px;background:#bfcddb;"></div>
<svg style="left:0;top:0" width="1" height="1"><path d="M15.5 166.5h6M28.5 172v26.5h10M33.5 182.5h5M15.5 214.5h6" stroke="#909090" fill="none"/><path d="M7 171.5h9M15.5 163v9" stroke="#c4c8e0" fill="none"/><rect x="6.5" y="162.5" width="8" height="8" rx="1" fill="#fff" stroke="#b0b4cc"/><rect x="7" y="167" width="7" height="3" fill="#e0e4f4"/><path d="M8 166.5h5" stroke="#000" stroke-width="1"/><rect x="22" y="160" width="12" height="12" fill="#a8e4f8"/><path d="M34 160v12h-12z" fill="#0c5c90"/><rect x="24.5" y="162.5" width="7" height="7" fill="#10b4e8"/><path d="M25 187.5h9M33.5 179v9" stroke="#c4c8e0" fill="none"/><rect x="24.5" y="178.5" width="8" height="8" rx="1" fill="#fff" stroke="#b0b4cc"/><rect x="25" y="183" width="7" height="3" fill="#e0e4f4"/><path d="M26 182.5h5" stroke="#000" stroke-width="1"/><path d="M28.5 180v5" stroke="#000" stroke-width="1"/><rect x="40" y="176" width="12" height="12" fill="#a8e4f8"/><path d="M52 176v12h-12z" fill="#0c5c90"/><rect x="42.5" y="178.5" width="7" height="7" fill="#10b4e8"/><rect x="40" y="192" width="12" height="12" fill="#a8e4f8"/><path d="M52 192v12h-12z" fill="#0c5c90"/><rect x="42.5" y="194.5" width="7" height="7" fill="#10b4e8"/><path d="M7 219.5h9M15.5 211v9" stroke="#c4c8e0" fill="none"/><rect x="6.5" y="210.5" width="8" height="8" rx="1" fill="#fff" stroke="#b0b4cc"/><rect x="7" y="215" width="7" height="3" fill="#e0e4f4"/><path d="M8 214.5h5" stroke="#000" stroke-width="1"/><path d="M10.5 212v5" stroke="#000" stroke-width="1"/><rect x="22" y="208" width="12" height="12" fill="#a8e4f8"/><path d="M34 208v12h-12z" fill="#0c5c90"/><rect x="24.5" y="210.5" width="7" height="7" fill="#10b4e8"/><path d="M20.5 222v15h14" fill="none" stroke="#2040d0" stroke-width="1.3"/><path d="M22 228l4-4 4 3 4-4" fill="none" stroke="#10a0e0" stroke-width="1.6"/><circle cx="28" cy="227.5" r="3" fill="none" stroke="#e02020" stroke-width="1.6"/><path d="M22 236c2-4 8-5 12 0z" fill="#20a040"/></svg>
<span class="t" style="left:41.3px;top:159.69px;font-size:11px;color:#000;font-family:'Liberation Sans', sans-serif;letter-spacing:0.006px;">testbench_aes_ad...</span>
<span class="t" style="left:58.5px;top:175.69px;font-size:11px;color:#000;font-family:'Liberation Sans', sans-serif;letter-spacing:0.234px;">dut</span>
<span class="t" style="left:59.5px;top:191.69px;font-size:11px;color:#000;font-family:'Liberation Sans', sans-serif;letter-spacing:0.180px;">#ublk#859754...</span>
<span class="t" style="left:40.5px;top:207.69px;font-size:11px;color:#000;font-family:'Liberation Sans', sans-serif;letter-spacing:-0.062px;">std</span>
<span class="t" style="left:41.6px;top:223.69px;font-size:11px;color:#000;font-family:'Liberation Sans', sans-serif;letter-spacing:0.038px;">#vsim_capacity#</span>
<div class="a" style="left:148px;top:158px;width:6px;height:70px;overflow:hidden">
<span class="t" style="left:0.8px;top:1.69px;font-size:11px;color:#000;font-family:'Liberation Sans', sans-serif;">t</span>
<span class="t" style="left:0.5px;top:17.69px;font-size:11px;color:#000;font-family:'Liberation Sans', sans-serif;">a</span>
<span class="t" style="left:0.8px;top:33.69px;font-size:11px;color:#000;font-family:'Liberation Sans', sans-serif;">t</span>
<span class="t" style="left:0.5px;top:49.69px;font-size:11px;color:#000;font-family:'Liberation Sans', sans-serif;">s</span>
</div>
<div class="a" style="left:0px;top:539px;width:154px;height:15px;background:#f8f8f8;"></div>
<div class="a" style="left:0px;top:539px;width:15px;height:15px;background:#f0f0f0;border-top:1px solid #fff;border-left:1px solid #fff;border-right:1px solid #696969;border-bottom:1px solid #696969;box-shadow:inset -1px -1px 0 #a0a0a0;"></div>
<div class="a" style="left:139px;top:539px;width:15px;height:15px;background:#f0f0f0;border-top:1px solid #fff;border-left:1px solid #fff;border-right:1px solid #696969;border-bottom:1px solid #696969;box-shadow:inset -1px -1px 0 #a0a0a0;"></div>
<svg style="left:0;top:0" width="1" height="1"><path d="M8.5 543.0v6l-3.5-3z" fill="#000"/><path d="M145.5 543.0v6l3.5-3z" fill="#000"/></svg>
<div class="a" style="left:16px;top:539px;width:18px;height:15px;background:#f0f0f0;border-top:1px solid #fff;border-left:1px solid #fff;border-right:1px solid #696969;border-bottom:1px solid #696969;box-shadow:inset -1px -1px 0 #a0a0a0;"></div>
<div class="a" style="left:0px;top:555px;width:155px;height:1px;background:#fff;"></div>
<div class="a" style="left:0px;top:556px;width:134px;height:23px;background:#f0f0f0;"></div>
<div class="a" style="left:134px;top:573px;width:21px;height:6px;background:#c8c8c8;"></div>
<div class="a" style="left:-1px;top:557px;width:73px;height:21px;background:#c8c8c8;border:1px solid #000;border-radius:0 0 3px 0;"></div>
<div class="a" style="left:71px;top:557px;width:60px;height:21px;background:#f0f0f0;border:1px solid #000;border-top:none;border-radius:0 0 3px 3px;"></div>
<span class="t" style="left:17.1px;top:560.69px;font-size:11px;color:#000;font-family:'Liberation Sans', sans-serif;letter-spacing:0.064px;">Project</span>
<span class="t" style="left:96px;top:560.69px;font-size:11px;color:#000;font-family:'Liberation Sans', sans-serif;letter-spacing:-0.670px;">sim</span>
<svg style="left:0;top:0" width="1" height="1"><path d="M59.5 562.5l6.5 6.5M66 562.5l-6.5 6.5" stroke="#a8a8a8" stroke-width="2"/><path d="M118.5 562.5l6.5 6.5M125 562.5l-6.5 6.5" stroke="#c0c0c0" stroke-width="2"/></svg>
<div class="a" style="left:134px;top:557px;width:11px;height:16px;background:#f0f0f0;border-top:1px solid #fff;border-left:1px solid #fff;border-right:1px solid #808080;border-bottom:1px solid #808080;"></div>
<div class="a" style="left:145px;top:557px;width:11px;height:16px;background:#f0f0f0;border-top:1px solid #fff;border-left:1px solid #fff;border-right:1px solid #808080;border-bottom:1px solid #808080;"></div>
<svg style="left:0;top:0" width="1" height="1"><path d="M141 560v9l-4.5-4.5z" fill="#000"/><path d="M149 561l3.5 3.5-3.5 3.5" fill="none" stroke="#000" stroke-dasharray="1 1"/></svg>
<svg style="left:0;top:0" width="1" height="1"><path d="M172 171.5h9M180.5 163v9" stroke="#c4c8e0" fill="none"/><rect x="171.5" y="162.5" width="8" height="8" rx="1" fill="#fff" stroke="#b0b4cc"/><rect x="172" y="167" width="7" height="3" fill="#e0e4f4"/><path d="M173 166.5h5" stroke="#000" stroke-width="1"/><path d="M175.5 164v5" stroke="#000" stroke-width="1"/><path d="M180 166.5h5" stroke="#a0a0a8"/><path d="M192.5 158.0L185.0 165.5L188.975 165.5L192.5 161.975z" fill="#84d6f8"/><path d="M192.5 158.0L200.0 165.5L196.025 165.5L192.5 161.975z" fill="#1d92da"/><path d="M192.5 173.0L185.0 165.5L188.975 165.5L192.5 169.025z" fill="#1a8ad0"/><path d="M192.5 173.0L200.0 165.5L196.025 165.5L192.5 169.025z" fill="#0f6aa4"/><path d="M192.5 161.975L196.025 165.5L192.5 169.025L188.975 165.5z" fill="#00b6f2"/><path d="M172 187.5h9M180.5 179v9" stroke="#c4c8e0" fill="none"/><rect x="171.5" y="178.5" width="8" height="8" rx="1" fill="#fff" stroke="#b0b4cc"/><rect x="172" y="183" width="7" height="3" fill="#e0e4f4"/><path d="M173 182.5h5" stroke="#000" stroke-width="1"/><path d="M175.5 180v5" stroke="#000" stroke-width="1"/><path d="M180 182.5h5" stroke="#a0a0a8"/><path d="M192.5 174.0L185.0 181.5L188.975 181.5L192.5 177.975z" fill="#84d6f8"/><path d="M192.5 174.0L200.0 181.5L196.025 181.5L192.5 177.975z" fill="#1d92da"/><path d="M192.5 189.0L185.0 181.5L188.975 181.5L192.5 185.025z" fill="#1a8ad0"/><path d="M192.5 189.0L200.0 181.5L196.025 181.5L192.5 185.025z" fill="#0f6aa4"/><path d="M192.5 177.975L196.025 181.5L192.5 185.025L188.975 181.5z" fill="#00b6f2"/><path d="M172 203.5h9M180.5 195v9" stroke="#c4c8e0" fill="none"/><rect x="171.5" y="194.5" width="8" height="8" rx="1" fill="#fff" stroke="#b0b4cc"/><rect x="172" y="199" width="7" height="3" fill="#e0e4f4"/><path d="M173 198.5h5" stroke="#000" stroke-width="1"/><path d="M175.5 196v5" stroke="#000" stroke-width="1"/><path d="M180 198.5h5" stroke="#a0a0a8"/><path d="M192.5 190.0L185.0 197.5L188.975 197.5L192.5 193.975z" fill="#84d6f8"/><path d="M192.5 190.0L200.0 197.5L196.025 197.5L192.5 193.975z" fill="#1d92da"/><path d="M192.5 205.0L185.0 197.5L188.975 197.5L192.5 201.025z" fill="#1a8ad0"/><path d="M192.5 205.0L200.0 197.5L196.025 197.5L192.5 201.025z" fill="#0f6aa4"/><path d="M192.5 193.975L196.025 197.5L192.5 201.025L188.975 197.5z" fill="#00b6f2"/><path d="M172 219.5h9M180.5 211v9" stroke="#c4c8e0" fill="none"/><rect x="171.5" y="210.5" width="8" height="8" rx="1" fill="#fff" stroke="#b0b4cc"/><rect x="172" y="215" width="7" height="3" fill="#e0e4f4"/><path d="M173 214.5h5" stroke="#000" stroke-width="1"/><path d="M175.5 212v5" stroke="#000" stroke-width="1"/><path d="M180 214.5h5" stroke="#a0a0a8"/><path d="M192.5 206.0L185.0 213.5L188.975 213.5L192.5 209.975z" fill="#84d6f8"/><path d="M192.5 206.0L200.0 213.5L196.025 213.5L192.5 209.975z" fill="#1d92da"/><path d="M192.5 221.0L185.0 213.5L188.975 213.5L192.5 217.025z" fill="#1a8ad0"/><path d="M192.5 221.0L200.0 213.5L196.025 213.5L192.5 217.025z" fill="#0f6aa4"/><path d="M192.5 209.975L196.025 213.5L192.5 217.025L188.975 213.5z" fill="#00b6f2"/></svg>
<span class="t" style="left:204.6px;top:159.69px;font-size:11px;color:#fff;font-family:'Liberation Sans', sans-serif;letter-spacing:0.108px;">state</span>
<span class="t" style="left:314.7px;top:159.69px;font-size:11px;color:#fff;font-family:'Liberation Sans', sans-serif;letter-spacing:-0.006px;">128&#x27;h...</span>
<span class="t" style="left:357.1px;top:159.69px;font-size:11px;color:#fff;font-family:'Liberation Sans', sans-serif;letter-spacing:-0.004px;">Pack...</span>
<span class="t" style="left:204.6px;top:175.69px;font-size:11px;color:#fff;font-family:'Liberation Sans', sans-serif;letter-spacing:-0.242px;">key</span>
<span class="t" style="left:314.7px;top:175.69px;font-size:11px;color:#fff;font-family:'Liberation Sans', sans-serif;letter-spacing:-0.006px;">128&#x27;h...</span>
<span class="t" style="left:357.1px;top:175.69px;font-size:11px;color:#fff;font-family:'Liberation Sans', sans-serif;letter-spacing:-0.004px;">Pack...</span>
<span class="t" style="left:204.6px;top:191.69px;font-size:11px;color:#fff;font-family:'Liberation Sans', sans-serif;letter-spacing:0.193px;">state_out</span>
<span class="t" style="left:314.7px;top:191.69px;font-size:11px;color:#fff;font-family:'Liberation Sans', sans-serif;letter-spacing:-0.006px;">128&#x27;h...</span>
<span class="t" style="left:357.1px;top:191.69px;font-size:11px;color:#fff;font-family:'Liberation Sans', sans-serif;letter-spacing:-0.004px;">Pack...</span>
<span class="t" style="left:204.6px;top:207.69px;font-size:11px;color:#fff;font-family:'Liberation Sans', sans-serif;letter-spacing:0.191px;">state_out_expecte...</span>
<span class="t" style="left:314.7px;top:207.69px;font-size:11px;color:#fff;font-family:'Liberation Sans', sans-serif;letter-spacing:-0.006px;">128&#x27;h...</span>
<span class="t" style="left:357.1px;top:207.69px;font-size:11px;color:#fff;font-family:'Liberation Sans', sans-serif;letter-spacing:-0.004px;">Pack...</span>
<div class="a" style="left:395px;top:158px;width:12px;height:64px;overflow:hidden">
<span class="t" style="left:0.5px;top:1.69px;font-size:11px;color:#fff;font-family:'Liberation Sans', sans-serif;">Int</span>
<span class="t" style="left:0.5px;top:17.69px;font-size:11px;color:#fff;font-family:'Liberation Sans', sans-serif;">Int</span>
<span class="t" style="left:0.5px;top:33.69px;font-size:11px;color:#fff;font-family:'Liberation Sans', sans-serif;">Int</span>
<span class="t" style="left:0.5px;top:49.69px;font-size:11px;color:#fff;font-family:'Liberation Sans', sans-serif;">Int</span>
</div>
<svg width="0" height="0" style="left:0;top:0"><defs><pattern id="pk" width="2" height="2" patternUnits="userSpaceOnUse"><rect x="0" y="0" width="1" height="1" fill="#000"/><rect x="1" y="1" width="1" height="1" fill="#000"/></pattern><pattern id="pg" width="2" height="2" patternUnits="userSpaceOnUse"><rect x="0" y="0" width="1" height="1" fill="#108020"/><rect x="1" y="1" width="1" height="1" fill="#108020"/></pattern><pattern id="pn" width="2" height="2" patternUnits="userSpaceOnUse"><rect x="0" y="0" width="1" height="1" fill="#101090"/><rect x="1" y="1" width="1" height="1" fill="#101090"/></pattern><pattern id="pr" width="2" height="2" patternUnits="userSpaceOnUse"><rect x="0" y="0" width="1" height="1" fill="#e02010"/><rect x="1" y="1" width="1" height="1" fill="#e02010"/></pattern><pattern id="po" width="2" height="2" patternUnits="userSpaceOnUse"><rect x="0" y="0" width="1" height="1" fill="#807800"/><rect x="1" y="1" width="1" height="1" fill="#807800"/></pattern><pattern id="py" width="2" height="2" patternUnits="userSpaceOnUse"><rect x="0" y="0" width="1" height="1" fill="#f0c800"/><rect x="1" y="1" width="1" height="1" fill="#f0c800"/></pattern><pattern id="pb" width="2" height="2" patternUnits="userSpaceOnUse"><rect x="0" y="0" width="1" height="1" fill="#2030ff"/><rect x="1" y="1" width="1" height="1" fill="#2030ff"/></pattern><pattern id="plg" width="2" height="2" patternUnits="userSpaceOnUse"><rect x="0" y="0" width="1" height="1" fill="#70b070"/><rect x="1" y="1" width="1" height="1" fill="#70b070"/></pattern><pattern id="pgy" width="2" height="2" patternUnits="userSpaceOnUse"><rect x="0" y="0" width="1" height="1" fill="#909090"/><rect x="1" y="1" width="1" height="1" fill="#909090"/></pattern><pattern id="plb" width="2" height="2" patternUnits="userSpaceOnUse"><rect x="0" y="0" width="1" height="1" fill="#60a8f0"/><rect x="1" y="1" width="1" height="1" fill="#60a8f0"/></pattern><pattern id="pbr" width="2" height="2" patternUnits="userSpaceOnUse"><rect x="0" y="0" width="1" height="1" fill="#a06010"/><rect x="1" y="1" width="1" height="1" fill="#a06010"/></pattern><pattern id="ppu" width="2" height="2" patternUnits="userSpaceOnUse"><rect x="0" y="0" width="1" height="1" fill="#5020d0"/><rect x="1" y="1" width="1" height="1" fill="#5020d0"/></pattern><pattern id="sn" width="2" height="2" patternUnits="userSpaceOnUse"><rect x="0" y="0" width="1" height="1" fill="#101090"/></pattern><linearGradient id="gbl" x1="0" y1="0" x2="0" y2="1"><stop offset="0" stop-color="#30a0ff"/><stop offset=".5" stop-color="#0020f0"/><stop offset="1" stop-color="#1030ff"/></linearGradient><linearGradient id="gbk" x1="0" y1="0" x2="1" y2="0"><stop offset="0" stop-color="#000"/><stop offset=".5" stop-color="#555"/><stop offset="1" stop-color="#111"/></linearGradient><linearGradient id="gfl" x1="0" y1="0" x2="1" y2="1"><stop offset="0" stop-color="#2890f0"/><stop offset=".5" stop-color="#b8e0ff"/><stop offset="1" stop-color="#3098f0"/></linearGradient></defs></svg>
<svg style="left:12px;top:26px" width="16" height="16" viewBox="0 0 16 16"><g shape-rendering="crispEdges"><path d="M1.5 0.5h9l3 3v12h-12z" fill="#fff" stroke="#b0b0b0"/><path d="M13.5 4v11.5h-12" fill="none" stroke="#707070"/><path d="M3 3.5h2M6 3.5h3M3 5.5h5M3 7.5h3M7 7.5h3M3 9.5h5M9 9.5h2M3 11.5h4M8 11.5h3" stroke="#000"/></g></svg>
<svg style="left:33px;top:34px" width="6" height="3" viewBox="0 0 6 3"><path d="M0 0h6l-3 3z" fill="#000"/></svg>
<svg style="left:44px;top:26px" width="16" height="16" viewBox="0 0 16 16"><path d="M1 5h4l1 1h5v2" fill="#ffff40" stroke="#000"/><path d="M1 5v9h10l4-6h-10l-4 6" fill="#808000" stroke="#000" stroke-linejoin="round"/><path d="M1.5 6v7l3-5h6v-1.5h-5l-1-1z" fill="#ffff40"/><path d="M8.500 3.500c2-2 4.500-1.500 5.500 1M14.500 2v3h-3" fill="none" stroke="#000"/></svg>
<svg style="left:66px;top:26px" width="16" height="16" viewBox="0 0 16 16"><rect x="1" y="1" width="14" height="14" fill="url(#po)"/><rect x="3" y="1" width="10" height="7" fill="#f0f0f0"/><rect x="1" y="1" width="14" height="14" fill="none" stroke="url(#pk)" stroke-width="1"/><rect x="4" y="10" width="8" height="5" fill="url(#pk)"/></svg>
<svg style="left:88px;top:26px" width="16" height="16" viewBox="0 0 16 16"><path d="M1 6l5-4 4 1 2-3 3 4-3 3-3-1-5 3z" fill="url(#plg)"/><path d="M4 12l3-4 4 2 5-3-3 6-4 1-2 2z" fill="url(#plg)"/></svg>
<svg style="left:110px;top:26px" width="16" height="16" viewBox="0 0 16 16"><path d="M4.500 0.500h8l-1.500 5h-8z" fill="#fff" stroke="#000"/><path d="M5.500 2.500h5M5 4h5" stroke="#000" stroke-width=".8"/><path d="M1.500 6.500h11l2.500 2v4l-2 2h-11l-1.500-2v-4z" fill="#fff" stroke="#000" stroke-width="1.300"/><path d="M1 10h12M2 12.500h11" stroke="#000"/><rect x="7" y="10" width="3" height="1.500" fill="#f0d000"/><path d="M13 7l2 2M13 10l2 2" stroke="#000" stroke-dasharray="1 1"/></svg>
<svg style="left:134px;top:26px" width="1" height="16" viewBox="0 0 1 16" shape-rendering="crispEdges"><path d="M.5 1v15" stroke="#000" stroke-dasharray="1 1"/></svg>
<svg style="left:144px;top:26px" width="16" height="16" viewBox="0 0 16 16"><g shape-rendering="crispEdges"><path d="M4.500 1l3 6M10.500 1l-3 6" stroke="#000" stroke-dasharray="1 1" fill="none"/><path d="M7.500 7l-4 4 2 3M7.500 7l4 4-2 3M5 10h5" stroke="#1010ff" stroke-dasharray="1 1" fill="none"/></g></svg>
<svg style="left:166px;top:26px" width="16" height="16" viewBox="0 0 16 16"><g shape-rendering="crispEdges"><path d="M0.500 0.500h4l2 2v7h-6z" fill="none" stroke="#000" stroke-dasharray="1 1"/><rect x="7" y="6" width="8" height="8" fill="url(#sn)"/><path d="M6.500 13.500v-9h5l3 3v7z" fill="none" stroke="#101090" stroke-dasharray="1 1"/></g></svg>
<svg style="left:187px;top:26px" width="16" height="16" viewBox="0 0 16 16"><rect x="0.700" y="1.700" width="12" height="12" rx="1" fill="#807838" stroke="#000" stroke-width="1.400"/><path d="M4 3.500l1.500-2.500h3l1.500 2.500z" fill="#e8d800" stroke="#000" stroke-width=".8"/><rect x="3.500" y="2.800" width="7" height="1.800" fill="#fff" stroke="#000" stroke-width=".6"/><path d="M6.500 7.500h6l3 3v4.500h-9z" fill="#fff" stroke="#000090" stroke-width="1.200"/><path d="M8 10.500h4M8 12.500h6" stroke="#000090" stroke-width="1.200"/></svg>
<svg style="left:209px;top:26px" width="16" height="16" viewBox="0 0 16 16"><g shape-rendering="crispEdges"><path d="M2 4l2 2-2 2" fill="none" stroke="#000" stroke-dasharray="1 1"/><path d="M6 3l2-2h3l4 4v2l-4 4" fill="none" stroke="#000" stroke-dasharray="2 1"/><path d="M1 14.500h14" stroke="#000" stroke-dasharray="1 1"/></g></svg>
<svg style="left:231px;top:26px" width="16" height="16" viewBox="0 0 16 16"><g shape-rendering="crispEdges"><path d="M13 3l2 2-2 2" fill="none" stroke="#000" stroke-dasharray="1 1"/><path d="M1 8v-3l3-4h4l3 3" fill="none" stroke="#000" stroke-dasharray="2 1"/><path d="M1 14.500h14" stroke="#000" stroke-dasharray="1 1"/></g></svg>
<svg style="left:255px;top:26px" width="1" height="16" viewBox="0 0 1 16" shape-rendering="crispEdges"><path d="M.5 1v15" stroke="#000" stroke-dasharray="1 1"/></svg>
<svg style="left:264px;top:26px" width="16" height="16" viewBox="0 0 16 16"><circle cx="8" cy="8" r="7" fill="url(#plg)"/><path d="M5 10l1-3 5-2-1 3z" fill="#fff"/></svg>
<svg style="left:285px;top:34px" width="3" height="2" viewBox="0 0 3 2" shape-rendering="crispEdges"><rect x="0" y="0" width="1" height="1"/><rect x="2" y="0" width="1" height="1"/><rect x="1" y="1" width="1" height="1"/></svg>
<svg style="left:295px;top:26px" width="16" height="16" viewBox="0 0 16 16"><path d="M3 1h3v2l1 2h2l1-2v-2h3v2l2 4v7h-5v-5h-4v5h-5v-7l2-4z" fill="#000"/><path d="M4 2h1M11 2h1M3 7v3M12 7v3M2 12v1M13 12v1M7.500 6v2" stroke="#fff" stroke-width="1"/></svg>
<svg style="left:316px;top:26px" width="16" height="16" viewBox="0 0 16 16"><g shape-rendering="crispEdges" fill="none" stroke="#000" stroke-dasharray="1 1"><circle cx="4" cy="4" r="3.500"/><path d="M8 3.500h7M9 12.500h7"/><rect x="0.500" y="9.500" width="6" height="6"/><path d="M4 3.500h1M6 11l2 1.500-2 1.500"/></g></svg>
<span class="t" style="left:358.5px;top:28.84px;font-size:12px;color:#000;font-family:'Liberation Sans', sans-serif;letter-spacing:-1.047px;">Help</span>
<div class="a" style="left:385px;top:25px;width:75px;height:20px;background:#fff;border-top:1px solid #8c8c8c;border-left:1px solid #8c8c8c;border-right:1px solid #fcfcfc;border-bottom:1px solid #fcfcfc;"></div>
<svg style="left:467px;top:26px" width="16" height="16" viewBox="0 0 16 16"><path d="M6 8l1-3h2l1 2h1l1-2h2l1 3 1 2v6h-4v-4h-2v4h-5v-6z" fill="#404040"/><path d="M1.500 4.500c0-4 7-4 7 0 0 2-3 2.500-3 5" fill="none" stroke="#ff9010" stroke-width="2.600"/><rect x="4" y="12" width="3" height="3" fill="#ff9010"/><path d="M3 11v3M9 10v3M12 12v2M13 6v1" stroke="#fff" stroke-width="1"/></svg>
<svg style="left:507px;top:26px" width="16" height="16" viewBox="0 0 16 16"><path d="M1 7l7-4 7 4-7 4z" fill="#fff" stroke="#000"/><path d="M1 9.500l7 4 7-4M1 12l7 4 7-4" fill="none" stroke="#000"/><path d="M6.500 0h3v4h2.500l-4 4-4-4h2.500z" fill="#000090"/></svg>
<svg style="left:529px;top:26px" width="16" height="16" viewBox="0 0 16 16"><g shape-rendering="crispEdges"><path d="M1.500 5v9.500h14v-9.500" fill="#fff" stroke="#000"/><path d="M2 1.500h13" stroke="#101090" stroke-dasharray="1 1"/><path d="M3 11.500h11M3 13.500h11" stroke="#000" stroke-dasharray="1 1"/><path d="M2 3h3v2h1.500l-3 3-3-3h1.500zM12 3h2v2h1.500l-3 3-3-3h1.500z" fill="#000090"/></g><path d="M4 4c0-3.500 7-3.500 7 0 0 2.500-3 2.500-3 6" fill="none" stroke="#1080ff" stroke-width="2.400"/><rect x="6.500" y="12" width="3" height="3" fill="#1080ff"/></svg>
<svg style="left:551px;top:26px" width="16" height="16" viewBox="0 0 16 16"><g shape-rendering="crispEdges"><path d="M0.500 5v9.500h14v-9.500" fill="#fff" stroke="#000"/><path d="M1 1.500h13M2 3.500h11" stroke="#101090" stroke-dasharray="1 2"/><path d="M2 11.500h11M2 13.500h11" stroke="#000" stroke-dasharray="1 1"/><path d="M3 3h2v3h2l-3 3-3-3h2zM9 3h2v3h2l-3 3-3-3h2z" fill="#000090"/></g></svg>
<svg style="left:573px;top:26px" width="16" height="16" viewBox="0 0 16 16"><path d="M6.500 0.500h7l2 3-2 7h-8l1-6z" fill="#fff" stroke="#000"/><path d="M1 1.500h3M0.500 3.500h3M0.500 5.500h2.500M0.500 7.500h2" stroke="#7070c0"/><path d="M8 2.500h4M8 4.500h5M7.500 6.500h4M7 8.500h4" stroke="#404098"/><path d="M3.500 9l3 3-3 3-3-3z" fill="#e00030" stroke="#000"/><path d="M12.500 10l2.500 2.500-2.500 2.500-2.500-2.500z" fill="#e00030" stroke="#000"/><path d="M6 6l-2 4M13 10l1-3" stroke="#000"/><rect x="3" y="11.500" width="1" height="1" fill="#fff"/><rect x="12" y="12" width="1" height="1" fill="#fff"/></svg>
<svg style="left:595px;top:26px" width="16" height="16" viewBox="0 0 16 16"><g shape-rendering="crispEdges"><rect x="0.5" y="2.5" width="10" height="13" fill="#fff" stroke="#808080"/><path d="M2 5.5h4M2 7.5h6M3 9.5h4M2 11.5h4M2 13.5h6" stroke="#000"/></g><path d="M13.500 5v9M11 10.500l2.500 3 2.500-3zM11 14.500h5" stroke="#000090" fill="#000090"/><path d="M5 0l10 9M15 0l-10 10" stroke="#800000" stroke-width="1.800"/></svg>
<div class="a" style="left:635px;top:26px;width:21px;height:21px;background:#f0f0f0;border-top:1px solid #fff;border-left:1px solid #fff;border-right:1px solid #808080;border-bottom:1px solid #808080;"></div>
<svg style="left:638px;top:29px" width="16" height="16" viewBox="0 0 16 16"><rect x="1.200" y="1.200" width="7.600" height="7.600" rx="1.500" fill="none" stroke="#005000" stroke-width="2.300"/><rect x="6.200" y="6.200" width="7.600" height="7.600" rx="1.500" fill="none" stroke="#005000" stroke-width="2.300"/><path d="M5 5l5 5" stroke="#f0f0f0" stroke-width="1"/></svg>
<svg style="left:661px;top:28px" width="16" height="16" viewBox="0 0 16 16"><g shape-rendering="crispEdges"><rect x="5.500" y="0.500" width="10" height="13" fill="#fff" stroke="#808080"/><path d="M7 3.500h4M8 5.500h5M8 7.500h4M8 9.500h5M8 11.500h6" stroke="#000"/><path d="M1 8v-5h3" fill="none" stroke="#1010ff" stroke-width="1.500"/><path d="M3 1l2.500 2-2.500 2z" fill="#1010ff"/><path d="M1 14.500h3v-5h2" fill="none" stroke="#900000" stroke-width="1.500"/></g></svg>
<svg style="left:681px;top:36px" width="6" height="3" viewBox="0 0 6 3"><path d="M0 0h6l-3 3z" fill="#000"/></svg>
<svg style="left:692px;top:28px" width="16" height="16" viewBox="0 0 16 16"><path d="M7.500 0l7 7h-4v9h-6v-9h-4z" fill="url(#gbk)"/></svg>
<svg style="left:714px;top:29px" width="16" height="16" viewBox="0 0 16 16"><path d="M0 6.500l7-6.500v4h9v5h-9v4z" fill="url(#gbk)"/></svg>
<svg style="left:736px;top:29px" width="16" height="16" viewBox="0 0 16 16"><path d="M16 6.500l-7-6.500v4h-9v5h9v4z" fill="url(#pk)"/></svg>
<svg style="left:760px;top:28px" width="1" height="16" viewBox="0 0 1 16" shape-rendering="crispEdges"><path d="M.5 1v15" stroke="#000" stroke-dasharray="1 1"/></svg>
<svg style="left:769px;top:28px" width="16" height="16" viewBox="0 0 16 16"><g shape-rendering="crispEdges"><rect x="0.5" y="2.5" width="10" height="13" fill="#fff" stroke="#808080"/><path d="M2 5.5h4M2 7.5h6M3 9.5h4M2 11.5h4M2 13.5h6" stroke="#000"/></g><path d="M13.500 2v13M11 4l2.500-3 2.500 3M11 6.500l2.500-3 2.500 3" stroke="#000090" fill="none" stroke-width="1.300"/></svg>
<div class="a" style="left:792px;top:26px;width:61px;height:19px;background:#fff;border-top:1px solid #8c8c8c;border-left:1px solid #8c8c8c;border-right:1px solid #fcfcfc;border-bottom:1px solid #fcfcfc;"></div>
<span class="t" style="left:808.3px;top:31.67px;font-size:11.667px;color:#000;font-family:'Liberation Mono', monospace;">100 ns</span>
<div class="a" style="left:853px;top:26px;width:13px;height:9px;background:#f0f0f0;border-top:1px solid #fff;border-left:1px solid #fff;border-right:1px solid #808080;border-bottom:1px solid #808080;"></div>
<div class="a" style="left:853px;top:35px;width:13px;height:9px;background:#f0f0f0;border-top:1px solid #fff;border-left:1px solid #fff;border-right:1px solid #808080;border-bottom:1px solid #808080;"></div>
<svg style="left:0;top:0" width="1" height="1"><path d="M856.500 32.500h6l-3-4z" fill="#000"/><path d="M856.500 37.500h6l-3 4z" fill="#000"/></svg>
<svg style="left:874px;top:28px" width="16" height="16" viewBox="0 0 16 16"><g shape-rendering="crispEdges"><rect x="0.5" y="2.5" width="10" height="13" fill="#fff" stroke="#808080"/><path d="M2 5.5h4M2 7.5h6M3 9.5h4M2 11.5h4M2 13.5h6" stroke="#000"/></g><path d="M13.500 1v12M11 10.500l2.500 3 2.500-3zM11 14.500h5" stroke="#000090" fill="#000090"/></svg>
<svg style="left:896px;top:28px" width="16" height="16" viewBox="0 0 16 16"><g shape-rendering="crispEdges"><rect x="0.5" y="2.5" width="10" height="13" fill="#fff" stroke="#808080"/><path d="M2 5.5h4M2 7.5h6M3 9.5h4M2 11.5h4M2 13.5h6" stroke="#000"/></g><path d="M13.500 6v6M11 9.500l2.500 3 2.500-3z" stroke="#000090" fill="#000090"/><path d="M13.500 1l2.500 2.500-2.500 2.500-2.500-2.500z" fill="#fff" stroke="#f00000"/></svg>
<svg style="left:918px;top:28px" width="16" height="16" viewBox="0 0 16 16"><g shape-rendering="crispEdges"><rect x="0.5" y="2.5" width="10" height="13" fill="#fff" stroke="#808080"/><path d="M2 5.5h4M2 7.5h6M3 9.5h4M2 11.5h4M2 13.5h6" stroke="#000"/></g><path d="M13.500 1v8M11 7.500l2.500 3 2.500-3zM11 10.500l2.500 3 2.500-3z" stroke="#000090" fill="#000090"/></svg>
<svg style="left:940px;top:28px" width="16" height="16" viewBox="0 0 16 16"><g shape-rendering="crispEdges"><rect x="0.5" y="2.5" width="10" height="13" fill="#fff" stroke="#808080"/><path d="M2 5.5h4M2 7.5h6M3 9.5h4M2 11.5h4M2 13.5h6" stroke="#000"/></g><path d="M13.500 5v9M11 10.500l2.500 3 2.500-3zM11 14.500h5" stroke="#000090" fill="#000090"/><path d="M5 0l10 9M15 0l-10 10" stroke="#800000" stroke-width="1.800"/></svg>
<svg style="left:961px;top:29px" width="16" height="16" viewBox="0 0 16 16"><path d="M5 0h6l4 4v6l-4 4h-6l-5-4v-6z" fill="url(#pr)"/><path d="M5 7h2M9 7h2" stroke="#f0f0f0"/></svg>
<svg style="left:986px;top:28px" width="1" height="16" viewBox="0 0 1 16" shape-rendering="crispEdges"><path d="M.5 1v15" stroke="#000" stroke-dasharray="1 1"/></svg>
<svg style="left:995px;top:29px" width="16" height="16" viewBox="0 0 16 16"><path d="M3 1l2 1 2-1 2 1 3 3-3 3 3 3-2 2-2-1-2 1-2-1-1-2 1-3-1-3z" fill="none" stroke="#000" stroke-dasharray="1 1" shape-rendering="crispEdges"/><path d="M0 1l14 12M13 3l-13 10" stroke="#a01010" stroke-width="1"/></svg>
<div class="a" style="left:1017px;top:26px;width:21px;height:21px;background:#f0f0f0;border-top:1px solid #fff;border-left:1px solid #fff;border-right:1px solid #808080;border-bottom:1px solid #808080;"></div>
<svg style="left:1020px;top:29px" width="16" height="16" viewBox="0 0 16 16"><g shape-rendering="crispEdges"><path d="M3.500 8v6.500h11v-7" fill="none" stroke="#505050" stroke-width="1.400"/><rect x="4" y="13" width="11" height="2" fill="#505050"/><rect x="6" y="10" width="2" height="3" fill="#00e000"/><rect x="9" y="3" width="2" height="10" fill="#ffee00"/><rect x="12" y="5" width="2" height="8" fill="#f00000"/></g><path d="M1 7v-6h5v4h-4" fill="none" stroke="#000" stroke-width="2"/></svg>
<div class="a" style="left:1043px;top:26px;width:21px;height:21px;background:#f0f0f0;border-top:1px solid #fff;border-left:1px solid #fff;border-right:1px solid #808080;border-bottom:1px solid #808080;"></div>
<svg style="left:1046px;top:29px" width="16" height="16" viewBox="0 0 16 16"><g shape-rendering="crispEdges"><path d="M3.500 8v6.500h11v-7" fill="none" stroke="#505050" stroke-width="1.400"/><rect x="4" y="13" width="11" height="2" fill="#505050"/><rect x="6" y="10" width="2" height="3" fill="#00e000"/><rect x="9" y="3" width="2" height="10" fill="#ffee00"/><rect x="12" y="5" width="2" height="8" fill="#f00000"/></g><path d="M1.500 7v-6h8v6M5.500 1v6" fill="none" stroke="#000" stroke-width="2.200"/></svg>
<svg style="left:1068px;top:28px" width="16" height="16" viewBox="0 0 16 16"><path d="M5 8v-6c0-1 2-1 2 0v-1c0-1 2-1 2 0v1c0-1 2-1 2 0v2c0-1 2-1 2 0v7l-2 4h-5l-5-7c-1-1 1-2 2-1z" fill="#fff" stroke="#000"/><path d="M6 13l4 1 4-3" stroke="#80a8e8" stroke-width="2.500"/><circle cx="14" cy="9" r="2" fill="#a0a0a0"/></svg>
<svg style="left:1110px;top:26px" width="16" height="16" viewBox="0 0 16 16"><path d="M5.500 0h5v5h3l-5.500 6-5.500-6h3z" fill="url(#gbl)"/><circle cx="8" cy="13.500" r="2.500" fill="#1030ff"/></svg>
<svg style="left:1131px;top:26px" width="16" height="16" viewBox="0 0 16 16"><path d="M1 7c0-7 11-8 12 0h3l-5 5-5-5h3c-1-4-6-4-8 0z" fill="url(#gbl)"/><circle cx="3" cy="10.500" r="2.500" fill="#1030ff"/></svg>
<svg style="left:1154px;top:26px" width="16" height="16" viewBox="0 0 16 16"><path d="M5.500 11h5v-5h3l-5.500-6-5.500 6h3z" fill="url(#gbl)"/><circle cx="8" cy="13.500" r="2.500" fill="#1030ff"/></svg>
<svg style="left:1177px;top:26px" width="1" height="16" viewBox="0 0 1 16" shape-rendering="crispEdges"><path d="M.5 1v15" stroke="#000" stroke-dasharray="1 1"/></svg>
<svg style="left:1187px;top:26px" width="16" height="16" viewBox="0 0 16 16"><path d="M5.500 0h5v5h3l-5.500 6-5.500-6h3z" fill="url(#gbl)"/><g shape-rendering="crispEdges"><rect x="1" y="11" width="1" height="5" fill="#1030ff"/><rect x="3" y="11" width="1" height="5" fill="#1030ff"/><rect x="12" y="11" width="1" height="5" fill="#1030ff"/><rect x="14" y="11" width="1" height="5" fill="#1030ff"/></g><circle cx="8" cy="13.500" r="2.500" fill="#1030ff"/></svg>
<svg style="left:1206px;top:34px" width="6" height="3" viewBox="0 0 6 3"><path d="M0 0h6l-3 3z" fill="#000"/></svg>
<svg style="left:1217px;top:26px" width="16" height="16" viewBox="0 0 16 16"><path d="M1 7c0-7 11-8 12 0h3l-5 5-5-5h3c-1-4-6-4-8 0z" fill="url(#gbl)"/><circle cx="3" cy="10.500" r="2.500" fill="#1030ff"/><path d="M1 14.500h15" stroke="#1030ff" stroke-width="3" stroke-dasharray="1 1" shape-rendering="crispEdges"/></svg>
<svg style="left:1237px;top:34px" width="6" height="3" viewBox="0 0 6 3"><path d="M0 0h6l-3 3z" fill="#000"/></svg>
<svg style="left:1249px;top:26px" width="16" height="16" viewBox="0 0 16 16"><path d="M5.500 10h5v-4h3l-5.500-6-5.500 6h3z" fill="url(#gbl)"/><g shape-rendering="crispEdges"><rect x="1" y="11" width="1" height="5" fill="#1030ff"/><rect x="3" y="11" width="1" height="5" fill="#1030ff"/><rect x="12" y="11" width="1" height="5" fill="#1030ff"/><rect x="14" y="11" width="1" height="5" fill="#1030ff"/></g><circle cx="8" cy="13.500" r="2.500" fill="#1030ff"/></svg>
<span class="t" style="left:1288.9px;top:26.84px;font-size:12px;color:#000;font-family:'Liberation Sans', sans-serif;letter-spacing:-0.339px;">Layout</span>
<div class="a" style="left:1328px;top:25px;width:123px;height:19px;background:#f0f0f0;border-top:1px solid #8c8c8c;border-left:1px solid #8c8c8c;border-right:1px solid #fcfcfc;border-bottom:1px solid #fcfcfc;"></div>
<span class="t" style="left:1330.3px;top:30.67px;font-size:11.667px;color:#000;font-family:'Liberation Mono', monospace;">Simulate</span>
<div class="a" style="left:1453px;top:25px;width:18px;height:18px;background:#f0f0f0;border-top:1px solid #fff;border-left:1px solid #fff;border-right:1px solid #808080;border-bottom:1px solid #808080;"></div>
<svg style="left:0;top:0" width="1" height="1"><path d="M1456 32h13l-6.500 7z" fill="#000"/></svg>
<span class="t" style="left:14.5px;top:58.84px;font-size:12px;color:#808080;font-family:'Liberation Sans', sans-serif;letter-spacing:-0.766px;">ColumnLayout</span>
<div class="a" style="left:88px;top:57px;width:214px;height:19px;background:#f0f0f0;border-top:1px solid #8c8c8c;border-left:1px solid #8c8c8c;border-right:1px solid #fcfcfc;border-bottom:1px solid #fcfcfc;"></div>
<span class="t" style="left:90.2px;top:62.67px;font-size:11.667px;color:#8c8c8c;font-family:'Liberation Mono', monospace;">Default</span>
<div class="a" style="left:304px;top:57px;width:18px;height:18px;background:#f0f0f0;border-top:1px solid #fff;border-left:1px solid #fff;border-right:1px solid #808080;border-bottom:1px solid #808080;"></div>
<svg style="left:0;top:0" width="1" height="1"><path d="M308 64h12l-6 6z" fill="url(#pk)"/></svg>
<svg style="left:347px;top:59px" width="16" height="16" viewBox="0 0 16 16"><path d="M0 4l3-2 3 1 3-3 2 1-1 7-3 1-3-1-4 2z" fill="url(#plb)"/><path d="M11 0l-1 9" stroke="url(#pbr)" stroke-width="2"/><path d="M12 9l3.500 3.500-3.500 3.500-3.500-3.500z" fill="#fff" stroke="#508030" stroke-dasharray="1 1"/></svg>
<svg style="left:368px;top:66px" width="3" height="2" viewBox="0 0 3 2" shape-rendering="crispEdges"><rect x="0" y="0" width="1" height="1"/><rect x="2" y="0" width="1" height="1"/><rect x="1" y="1" width="1" height="1"/></svg>
<svg style="left:378px;top:59px" width="16" height="16" viewBox="0 0 16 16"><path d="M1 4c2-2 4-2 6-1s4 0 5-1l-1 7c-2 1-4 1-5 0s-4-1-6 1z" fill="url(#gfl)" stroke="#2080e8" stroke-width=".8"/><path d="M12.5 1.5l-1.5 13" stroke="#b07830" stroke-width="1.6"/><circle cx="12" cy="12" r="3.700" fill="#e85010"/><path d="M10 12h4" stroke="#fff" stroke-width="1.500"/></svg>
<svg style="left:398px;top:66px" width="6" height="3" viewBox="0 0 6 3"><path d="M0 0h6l-3 3z" fill="#000"/></svg>
<svg style="left:409px;top:59px" width="16" height="16" viewBox="0 0 16 16"><path d="M1 4c2-2 4-2 6-1s4 0 5-1l-1 7c-2 1-4 1-5 0s-4-1-6 1z" fill="url(#gfl)" stroke="#2080e8" stroke-width=".8"/><path d="M12.5 1.5l-1.5 13" stroke="#b07830" stroke-width="1.6"/><path d="M5 14l1-3 7-7 2 2-7 7z" fill="#f8d860" stroke="#b07020" stroke-width=".8"/></svg>
<svg style="left:431px;top:59px" width="16" height="16" viewBox="0 0 16 16"><path d="M1 4c2-2 4-2 6-1s4 0 5-1l-1 7c-2 1-4 1-5 0s-4-1-6 1z" fill="url(#gfl)" stroke="#2080e8" stroke-width=".8"/><path d="M12.5 1.5l-1.5 13" stroke="#b07830" stroke-width="1.6"/><rect x="6.500" y="6.500" width="9" height="9" fill="#5080e0" stroke="#2050c0"/><rect x="8" y="7" width="6" height="3" fill="#fff"/><rect x="9" y="12.500" width="4" height="2" fill="#a0d040"/></svg>
<svg style="left:451px;top:66px" width="6" height="3" viewBox="0 0 6 3"><path d="M0 0h6l-3 3z" fill="#000"/></svg>
<svg style="left:462px;top:59px" width="16" height="16" viewBox="0 0 16 16"><path d="M1 4c2-2 4-2 6-1s4 0 5-1l-1 7c-2 1-4 1-5 0s-4-1-6 1z" fill="url(#gfl)" stroke="#2080e8" stroke-width=".8"/><path d="M12.5 1.5l-1.5 13" stroke="#b07830" stroke-width="1.6"/><path d="M6 9h4v-3l6 5-6 5v-3h-4z" fill="#70b050" stroke="#308020"/></svg>
<div class="a" style="left:502px;top:58px;width:20px;height:20px;background:#fff;border-top:1px solid #8c8c8c;border-left:1px solid #8c8c8c;border-right:1px solid #fcfcfc;border-bottom:1px solid #fcfcfc;"></div>
<div class="a" style="left:528px;top:58px;width:20px;height:20px;background:#fff;border-top:1px solid #8c8c8c;border-left:1px solid #8c8c8c;border-right:1px solid #fcfcfc;border-bottom:1px solid #fcfcfc;"></div>
<div class="a" style="left:554px;top:58px;width:20px;height:20px;background:#fff;border-top:1px solid #8c8c8c;border-left:1px solid #8c8c8c;border-right:1px solid #fcfcfc;border-bottom:1px solid #fcfcfc;"></div>
<div class="a" style="left:580px;top:58px;width:20px;height:20px;background:#fff;border-top:1px solid #8c8c8c;border-left:1px solid #8c8c8c;border-right:1px solid #fcfcfc;border-bottom:1px solid #fcfcfc;"></div>
<div class="a" style="left:606px;top:58px;width:21px;height:21px;background:#f0f0f0;border-top:1px solid #fff;border-left:1px solid #fff;border-right:1px solid #808080;border-bottom:1px solid #808080;"></div>
<svg style="left:0;top:0" width="1" height="1"><g shape-rendering="crispEdges" fill="none" stroke="#000" stroke-dasharray="1 1"><path d="M512.500 65v6M510.500 73.500l2-2 2 2"/><path d="M537.500 64.500l-3.500 4 3.500 4 3.500-4z"/><path d="M558 64.500h3M559.500 65v7M558 72.500h3M565 64l-3 9M569.500 64.500l-3 4 3 4 3-4z"/><rect x="584.500" y="63.500" width="11" height="11"/><path d="M590 67l2 2v3h-2"/><path d="M609.500 73l2.500-7 2.500 7M610.500 71h3M616.500 66v7h3M621.500 66v7h3" stroke-width="1.300"/></g></svg>
<svg style="left:632px;top:59px" width="16" height="16" viewBox="0 0 16 16"><path d="M0 11l6-7 5 5-6 7z" fill="url(#pb)"/><path d="M6 4l3-4 6 6-4 3z" fill="url(#pgy)"/><path d="M0 5l4-4 2 2-4 4z" fill="url(#ppu)" opacity=".4"/><path d="M10 9l3-3 3 3v5h-3z" fill="url(#plg)" opacity=".6"/></svg>
<div class="a" style="left:672px;top:58px;width:20px;height:20px;background:#fff;border-top:1px solid #8c8c8c;border-left:1px solid #8c8c8c;border-right:1px solid #fcfcfc;border-bottom:1px solid #fcfcfc;"></div>
<div class="a" style="left:698px;top:58px;width:21px;height:21px;background:#f0f0f0;border-top:1px solid #fff;border-left:1px solid #fff;border-right:1px solid #808080;border-bottom:1px solid #808080;"></div>
<div class="a" style="left:724px;top:58px;width:21px;height:21px;background:#f0f0f0;border-top:1px solid #fff;border-left:1px solid #fff;border-right:1px solid #808080;border-bottom:1px solid #808080;"></div>
<div class="a" style="left:750px;top:58px;width:21px;height:21px;background:#f0f0f0;border-top:1px solid #fff;border-left:1px solid #fff;border-right:1px solid #808080;border-bottom:1px solid #808080;"></div>
<div class="a" style="left:776px;top:58px;width:21px;height:21px;background:#f0f0f0;border-top:1px solid #fff;border-left:1px solid #fff;border-right:1px solid #808080;border-bottom:1px solid #808080;"></div>
<svg style="left:0;top:0" width="1" height="1"><path d="M679 62l7 6h-3v3h-2l-2 -2z" fill="url(#pk)"/><path d="M683 70l4 4" stroke="#000"/><g shape-rendering="crispEdges" fill="none" stroke="#000" stroke-dasharray="1 1"><path d="M703 68v-5h5"/><rect x="706.500" y="65.500" width="6" height="6" stroke-width="2"/><path d="M712 71l4 4" stroke-width="2"/><path d="M734.500 60l-3.500 4h7zM734.500 76l-3.500-4h7zM726 68l4-3.500v7zM743 68l-4-3.500v7zM731 68h7M734.500 64v8"/><path d="M756.500 62v9M754 73.500l2.500-2.500 2.500 2.500-2.500 2.500zM763.500 62v9M761 72.500h5M761 74.500h5"/><path d="M780 62.500h4l2 2v8l2 2h6M781.500 66.500l1.500 1.500-1.500 1.500-1.500-1.500zM792.500 69l1.500 1.500-1.500 1.500-1.500-1.500zM779 72.500h4M791 66h2"/></g></svg>
<svg style="left:804px;top:59px" width="1" height="16" viewBox="0 0 1 16" shape-rendering="crispEdges"><path d="M.5 1v15" stroke="#000" stroke-dasharray="1 1"/></svg>
<svg style="left:813px;top:60px" width="16" height="16" viewBox="0 0 16 16"><rect x="0" y="0" width="8" height="16" fill="url(#pk)"/><circle cx="4" cy="3" r="2.500" fill="#ff2020"/><circle cx="4" cy="8" r="1.800" fill="#f0e020"/><circle cx="4" cy="13" r="1.500" fill="#20d020"/><path d="M9.500 6.500h2l3 2.500-3 2.500h-2" fill="none" stroke="#000" stroke-dasharray="1 1" shape-rendering="crispEdges"/><rect x="9" y="6" width="1" height="1" fill="#40a0ff"/><rect x="15" y="8" width="1" height="1" fill="#40a0ff"/></svg>
<svg style="left:853px;top:58px" width="16" height="16" viewBox="0 0 16 16"><g shape-rendering="crispEdges" fill="none" stroke="#000" stroke-dasharray="1 1"><path d="M1 1h2l3 3-3 3h-2M1 12l2 2 3-3"/></g><path d="M7 8l4-4v8zM11 6l3-2v8l-3-2z" fill="url(#pb)"/><path d="M11 8h5" stroke="#2040ff" stroke-dasharray="1 1"/></svg>
<svg style="left:874px;top:66px" width="3" height="2" viewBox="0 0 3 2" shape-rendering="crispEdges"><rect x="0" y="0" width="1" height="1"/><rect x="2" y="0" width="1" height="1"/><rect x="1" y="1" width="1" height="1"/></svg>
<svg style="left:884px;top:58px" width="16" height="16" viewBox="0 0 16 16"><g shape-rendering="crispEdges" fill="none" stroke="#000" stroke-dasharray="1 1"><path d="M15 1h-2l-3 3 3 3h2M15 12l-2 2-3-3"/></g><path d="M9 8l-4-4v8zM5 6l-3-2v8l3-2z" fill="url(#pb)"/><path d="M0 8h5" stroke="#2040ff" stroke-dasharray="1 1"/></svg>
<svg style="left:905px;top:66px" width="3" height="2" viewBox="0 0 3 2" shape-rendering="crispEdges"><rect x="0" y="0" width="1" height="1"/><rect x="2" y="0" width="1" height="1"/><rect x="1" y="1" width="1" height="1"/></svg>
<svg style="left:915px;top:58px" width="16" height="16" viewBox="0 0 16 16"><g shape-rendering="crispEdges" fill="none" stroke="#000" stroke-dasharray="1 1"><path d="M0 1.500h6M0 4.500h4M0 8.500h3M0 11.500h4M0 14.500h6"/><path d="M8 3l5 5-5 5-5-5z" stroke-width="1.500"/></g><path d="M8 5l3 3-3 3-3-3z" fill="#20e020"/><path d="M15 6.500l1.500 1.500-1.500 1.500-1.500-1.500z" fill="#2020ff"/></svg>
<svg style="left:939px;top:58px" width="1" height="16" viewBox="0 0 1 16" shape-rendering="crispEdges"><path d="M.5 1v15" stroke="#000" stroke-dasharray="1 1"/></svg>
<span class="t" style="left:950.2px;top:59.84px;font-size:12px;color:#808080;font-family:'Liberation Sans', sans-serif;letter-spacing:-0.666px;">Search:</span>
<div class="a" style="left:993px;top:58px;width:116px;height:19px;background:#f0f0f0;border-top:1px solid #8c8c8c;border-left:1px solid #8c8c8c;border-right:1px solid #fcfcfc;border-bottom:1px solid #fcfcfc;"></div>
<div class="a" style="left:1111px;top:58px;width:18px;height:18px;background:#f0f0f0;border-top:1px solid #fff;border-left:1px solid #fff;border-right:1px solid #808080;border-bottom:1px solid #808080;"></div>
<svg style="left:0;top:0" width="1" height="1"><path d="M1115 65h11l-5.500 6z" fill="url(#pk)"/></svg>
<svg style="left:1133px;top:59px" width="16" height="16" viewBox="0 0 16 16"><path d="M3 1h3l1 3h2l1-3h3l2 5v6h-5v-4h-4v4h-5v-6z" fill="url(#pgy)"/><path d="M0 13l3-3 1 1 3 0-3 4-1-1z" fill="url(#pb)"/></svg>
<svg style="left:1153px;top:59px" width="16" height="16" viewBox="0 0 16 16"><path d="M3 1h3l1 3h2l1-3h3l2 5v6h-5v-4h-4v4h-5v-6z" fill="url(#pgy)"/><path d="M16 13l-3-3-1 1-3 0 3 4 1-1z" fill="url(#pb)"/></svg>
<svg style="left:1178px;top:59px" width="16" height="16" viewBox="0 0 16 16"><path d="M1 1h8l4 4-3 6h-9z" fill="url(#pgy)"/><path d="M10 5l5-2 1 3-5 3z" fill="url(#pgy)" opacity=".5"/><path d="M5 12l6-6 3 2-6 7z" fill="#b0c8f0" opacity=".9"/></svg>
<svg style="left:1219px;top:58px" width="16" height="16" viewBox="0 0 16 16"><g shape-rendering="crispEdges" fill="none" stroke-dasharray="1 1"><path d="M6.500 0v9" stroke="#f0c000"/><path d="M5.500 1v8" stroke="#604000"/><ellipse cx="6.500" cy="12.500" rx="6" ry="3" stroke="#f0c000" stroke-width="1.600"/><ellipse cx="6.500" cy="13.500" rx="6" ry="2.500" stroke="#604000"/><path d="M11.500 2l2 2-2 2-2-2z" stroke="#604000"/><path d="M10 4h4" stroke="#f0c000"/></g></svg>
<svg style="left:1241px;top:58px" width="16" height="16" viewBox="0 0 16 16"><g shape-rendering="crispEdges" fill="none" stroke-dasharray="1 1"><path d="M6.500 0v9" stroke="#f0c000"/><path d="M5.500 1v8" stroke="#604000"/><ellipse cx="6.500" cy="12.500" rx="6" ry="3" stroke="#f0c000" stroke-width="1.600"/><ellipse cx="6.500" cy="13.500" rx="6" ry="2.500" stroke="#604000"/><path d="M8 3.500h7" stroke="#604000"/><path d="M8 2.500h3" stroke="#f0c000"/></g></svg>
<svg style="left:1264px;top:58px" width="16" height="16" viewBox="0 0 16 16"><g shape-rendering="crispEdges" fill="none" stroke-dasharray="1 1"><path d="M0 1.500h4l2 2v9l1 1h10" stroke="#108030" stroke-width="1.200"/><path d="M8 6.500l3-3v6zM11 6.500h5" stroke="#5020d0" stroke-width="1.200"/></g></svg>
<svg style="left:1286px;top:58px" width="16" height="16" viewBox="0 0 16 16"><g shape-rendering="crispEdges" fill="none" stroke-dasharray="1 1"><path d="M16 1.500h-4l-2 2v9l-1 1h-8" stroke="#108030" stroke-width="1.200"/><path d="M8 6.500l-3-3v6zM5 6.500h-5" stroke="#5020d0" stroke-width="1.200"/></g></svg>
<svg style="left:1308px;top:58px" width="16" height="16" viewBox="0 0 16 16"><g shape-rendering="crispEdges" fill="none" stroke-dasharray="1 1"><path d="M0 1.500h4l2 2v9l1 1h9" stroke="#108030" stroke-width="1.200"/><path d="M4 5l2 2 2-2M9 8.500l1.500 1.500-1.500 1.500-1.500-1.500zM12 10h1" stroke="#5020d0" stroke-width="1.200"/></g></svg>
<svg style="left:1330px;top:58px" width="16" height="16" viewBox="0 0 16 16"><g shape-rendering="crispEdges" fill="none" stroke-dasharray="1 1"><path d="M0 1.500h8v10l2 2h6" stroke="#108030" stroke-width="1.200"/><path d="M8.500 5l1.500 1.500-1.500 1.500-1.500-1.500zM5.500 9l1.500 1.500-1.500 1.500-1.500-1.500zM2 10.500h2" stroke="#5020d0" stroke-width="1.200"/></g></svg>
<svg style="left:1352px;top:58px" width="16" height="16" viewBox="0 0 16 16"><g shape-rendering="crispEdges" fill="none" stroke-dasharray="1 1"><path d="M15 1.500h-8v10l-2 2h-5" stroke="#108030" stroke-width="1.200"/><path d="M6.500 5l1.500 1.500-1.500 1.500-1.500-1.500zM9.500 9l1.500 1.500-1.500 1.500-1.500-1.500zM12 10.500h2" stroke="#5020d0" stroke-width="1.200"/></g></svg>
<svg style="left:1374px;top:58px" width="16" height="16" viewBox="0 0 16 16"><g shape-rendering="crispEdges" fill="none" stroke-dasharray="1 1"><path d="M15 1.500h-5v10l-2 2h-8" stroke="#108030" stroke-width="1.200"/><path d="M10.500 5l1.500 1.500-1.500 1.500-1.500-1.500zM7.500 9l1.500 1.500-1.500 1.500-1.500-1.500zM4 10.500h2" stroke="#5020d0" stroke-width="1.200"/></g></svg>
<svg style="left:1415px;top:58px" width="16" height="16" viewBox="0 0 16 16"><circle cx="6.500" cy="6.500" r="6" fill="none" stroke="#000" stroke-dasharray="2 1.500"/><path d="M4 6.500h5M6.500 4v5" stroke="#404040" stroke-dasharray="1 1"/><rect x="4.500" y="4.500" width="4" height="4" fill="none" stroke="#404040" stroke-dasharray="1 1"/><path d="M10.500 10.500l5 5" stroke="#1020d0" stroke-width="1.600"/></svg>
<svg style="left:1437px;top:58px" width="16" height="16" viewBox="0 0 16 16"><circle cx="6.500" cy="6.500" r="6" fill="none" stroke="#000" stroke-dasharray="2 1.500"/><path d="M3 6.500l1 1 1-1 1 1 1-1 1 1 1-1 1 1" fill="none" stroke="#404040" stroke-width=".8"/><path d="M10.500 10.500l5 5" stroke="#1020d0" stroke-width="1.600"/></svg>
<svg style="left:1459px;top:58px" width="16" height="16" viewBox="0 0 16 16"><circle cx="6.500" cy="6.500" r="6" fill="url(#pn)" stroke="#000" stroke-dasharray="2 1.500"/><circle cx="6.500" cy="6.500" r="5" fill="#508090" opacity=".5"/><path d="M10.500 10.500l5 5" stroke="#1020d0" stroke-width="1.600"/></svg>
<svg style="left:1480px;top:58px" width="16" height="16" viewBox="0 0 16 16"><g shape-rendering="crispEdges" fill="none" stroke-dasharray="1 1"><path d="M5.500 0v10" stroke="#f0c000" stroke-width="1.500"/><ellipse cx="6" cy="13" rx="5.500" ry="2.500" stroke="#f0c000" stroke-width="1.500"/><ellipse cx="6" cy="14" rx="5.500" ry="2" stroke="#a05000"/></g><path d="M11.500 0l3.500 3.500-3.500 3.500-3.500-3.500z" fill="#c8c8c8" stroke="#000" stroke-dasharray="1 2"/><path d="M14 5l2 2v2" fill="none" stroke="#1020ff" stroke-dasharray="2 1" stroke-width="1.500"/></svg>
<svg style="left:1502px;top:58px" width="16" height="16" viewBox="0 0 16 16"><g shape-rendering="crispEdges" fill="none" stroke-dasharray="1 1"><path d="M3.500 4v7M11.500 4v7" stroke="#f0c000" stroke-width="1.500"/><ellipse cx="4" cy="13.500" rx="3.500" ry="2" stroke="#f0c000" stroke-width="1.500"/><ellipse cx="12" cy="13.500" rx="3.500" ry="2" stroke="#f0c000" stroke-width="1.500"/><path d="M1 15.500h14" stroke="#a05000"/></g><path d="M11.500 0l3.500 3.500-3.500 3.500-3.500-3.500z" fill="#c8c8c8" stroke="#000" stroke-dasharray="1 2"/><path d="M14 5l2 2v2" fill="none" stroke="#1020ff" stroke-dasharray="2 1" stroke-width="1.500"/></svg>
<svg style="left:1524px;top:58px" width="16" height="16" viewBox="0 0 16 16"><g shape-rendering="crispEdges" fill="none" stroke="#1010c0" stroke-dasharray="1 1"><path d="M0.500 12v-11.500h8l2 3M0.500 12.500h5M3 5l2-2 2 2 2-2" stroke-width="1.300"/></g><path d="M10.500 6l3.500 3.500-3.500 3.500-3.500-3.500z" fill="#b0b0b0" stroke="#000" stroke-dasharray="2 1"/><path d="M12.500 12l3.500 3.500" stroke="url(#pb)" stroke-width="2.500"/></svg>
<div class="a" style="left:13px;top:90px;width:20px;height:20px;background:#fff;border-top:1px solid #8c8c8c;border-left:1px solid #8c8c8c;border-right:1px solid #fcfcfc;border-bottom:1px solid #fcfcfc;"></div>
<div class="a" style="left:39px;top:90px;width:21px;height:21px;background:#f0f0f0;border-top:1px solid #fff;border-left:1px solid #fff;border-right:1px solid #808080;border-bottom:1px solid #808080;"></div>
<div class="a" style="left:65px;top:90px;width:21px;height:21px;background:#f0f0f0;border-top:1px solid #fff;border-left:1px solid #fff;border-right:1px solid #808080;border-bottom:1px solid #808080;"></div>
<svg style="left:0;top:0" width="1" height="1"><g shape-rendering="crispEdges" fill="none" stroke-dasharray="1 1"><path d="M23.500 95v11M17 107.500h15" stroke="#108030"/><rect x="45" y="92" width="8" height="16" fill="url(#pn)" stroke="none"/><path d="M48.500 93v14M42 106.500h16" stroke="#108030"/><rect x="68" y="92" width="14" height="16" fill="url(#pg)" stroke="none"/></g></svg>
<svg style="left:93px;top:92px" width="1" height="16" viewBox="0 0 1 16" shape-rendering="crispEdges"><path d="M.5 1v15" stroke="#000" stroke-dasharray="1 1"/></svg>
<svg style="left:102px;top:92px" width="16" height="16" viewBox="0 0 16 16"><rect x="0" y="0" width="16" height="16" fill="url(#pn)"/><path d="M8.500 0v16" stroke="url(#pg)" stroke-width="2"/></svg>
<svg style="left:124px;top:92px" width="16" height="16" viewBox="0 0 16 16"><rect x="5" y="0" width="4" height="16" fill="url(#pn)"/><g shape-rendering="crispEdges" fill="none" stroke-dasharray="1 1"><path d="M4.500 0v15" stroke="#f0f000"/><path d="M0 14.500h6v-13h8" stroke="#108030"/></g></svg>
<svg style="left:146px;top:92px" width="16" height="16" viewBox="0 0 16 16"><g shape-rendering="crispEdges" fill="none" stroke-dasharray="1 1"><path d="M0 14.500h7v-13h8" stroke="#108030"/></g></svg>
<svg style="left:168px;top:92px" width="16" height="16" viewBox="0 0 16 16"><g shape-rendering="crispEdges" fill="none" stroke-dasharray="1 1"><path d="M0 14.500h6M7.500 1.500h8" stroke="#108030"/><path d="M6.500 0v15" stroke="#f0f000"/></g></svg>
<svg style="left:208px;top:90px" width="16" height="16" viewBox="0 0 16 16"><g shape-rendering="crispEdges" fill="none" stroke-dasharray="1 1" stroke="#10c010" stroke-width="1.300"><path d="M0 14l2 1 2-3v-11h4"/></g><path d="M7 8l4-4v8z" fill="url(#pb)"/><path d="M11 8h4" stroke="#2050ff" stroke-dasharray="1 1" stroke-width="2"/></svg>
<svg style="left:230px;top:90px" width="16" height="16" viewBox="0 0 16 16"><path d="M0 8l4-4v8z" fill="url(#pb)"/><path d="M4 8h4" stroke="#2050ff" stroke-dasharray="1 1" stroke-width="2"/><g shape-rendering="crispEdges" fill="none" stroke-dasharray="1 1" stroke="#f8c800" stroke-width="1.500"><path d="M10.500 0v11"/><ellipse cx="10.500" cy="13.500" rx="4" ry="2"/></g></svg>
<svg style="left:252px;top:90px" width="16" height="16" viewBox="0 0 16 16"><path d="M14 8l-4-4v8z" fill="url(#pb)"/><path d="M6 8h4" stroke="#2050ff" stroke-dasharray="1 1" stroke-width="2"/><g shape-rendering="crispEdges" fill="none" stroke-dasharray="1 1" stroke="#f8c800" stroke-width="1.500"><path d="M4.500 0v11"/><ellipse cx="4.500" cy="13.500" rx="4" ry="2"/></g></svg>
<svg style="left:274px;top:90px" width="16" height="16" viewBox="0 0 16 16"><g shape-rendering="crispEdges"><path d="M0 2l8 13M8 2l-8 13" stroke="#f02020" stroke-dasharray="1 1" stroke-width="1.500"/></g><path d="M7 8l4-4v8z" fill="url(#pb)"/><path d="M11 8h4" stroke="#2050ff" stroke-dasharray="1 1" stroke-width="2"/></svg>
<svg style="left:296px;top:90px" width="16" height="16" viewBox="0 0 16 16"><g shape-rendering="crispEdges" fill="none" stroke="#000" stroke-dasharray="1 1"><path d="M0 1h3l4 4-4 3M0 14l3 1 4-4"/></g><path d="M8 8l4-4v8z" fill="url(#pb)"/><path d="M12 8h4" stroke="#2050ff" stroke-dasharray="1 1" stroke-width="2"/></svg>
<svg style="left:318px;top:90px" width="16" height="16" viewBox="0 0 16 16"><g shape-rendering="crispEdges" fill="none" stroke-dasharray="1 1"><path d="M0 1l6 7-6 7M15 1l-6 7 6 7" stroke="#101090"/><path d="M0 2.500h3M12 2.500h3M0 8.500h4M11 8.500h4M0 14.500h3M12 14.500h3" stroke="#40a0ff"/></g></svg>
<svg style="left:340px;top:90px" width="16" height="16" viewBox="0 0 16 16"><path d="M8 8l-4-4v8z" fill="url(#pb)"/><path d="M0 8h4" stroke="#2050ff" stroke-dasharray="1 1" stroke-width="2"/><g shape-rendering="crispEdges" fill="none" stroke="#000" stroke-dasharray="1 1"><path d="M16 1h-3l-4 4 4 3M16 14l-3 1-4-4"/></g></svg>
<svg style="left:364px;top:91px" width="1" height="16" viewBox="0 0 1 16" shape-rendering="crispEdges"><path d="M.5 1v15" stroke="#000" stroke-dasharray="1 1"/></svg>
<svg style="left:373px;top:90px" width="16" height="16" viewBox="0 0 16 16"><g shape-rendering="crispEdges" fill="none" stroke="#000" stroke-dasharray="1 1"><path d="M3 2.500h12M1 5l2-2.500M1 5l2 2h10M3 10.500h10l3-3M3 13.500h10"/></g><rect x="3" y="3" width="12" height="4" fill="#e0e0e0" opacity=".7"/><rect x="3" y="10" width="10" height="3" fill="url(#pgy)" opacity=".6"/></svg>
<svg style="left:394px;top:98px" width="3" height="2" viewBox="0 0 3 2" shape-rendering="crispEdges"><rect x="0" y="0" width="1" height="1"/><rect x="2" y="0" width="1" height="1"/><rect x="1" y="1" width="1" height="1"/></svg>
<svg style="left:404px;top:90px" width="16" height="16" viewBox="0 0 16 16"><path d="M0 2l12 12M1 1l12 12M13 2l-12 12M14 3l-11 11" stroke="#902020" stroke-width="1" stroke-dasharray="1 1" shape-rendering="crispEdges"/></svg>
<svg style="left:425px;top:98px" width="3" height="2" viewBox="0 0 3 2" shape-rendering="crispEdges"><rect x="0" y="0" width="1" height="1"/><rect x="2" y="0" width="1" height="1"/><rect x="1" y="1" width="1" height="1"/></svg>
<svg style="left:435px;top:90px" width="16" height="16" viewBox="0 0 16 16"><path d="M0 9l8-8 4 1 4 4v4l-5 2-4 3z" fill="#d8d8d8"/><g shape-rendering="crispEdges" fill="none" stroke="#000" stroke-dasharray="1 1"><path d="M0 9l8-8h3l5 5v4l-2 1M0 9l5 5 4-4M9 7h3v4"/></g></svg>
<svg style="left:459px;top:91px" width="1" height="16" viewBox="0 0 1 16" shape-rendering="crispEdges"><path d="M.5 1v15" stroke="#000" stroke-dasharray="1 1"/></svg>
<div class="a" style="left:468px;top:90px;width:21px;height:21px;background:#f0f0f0;border-top:1px solid #fff;border-left:1px solid #fff;border-right:1px solid #808080;border-bottom:1px solid #808080;"></div>
<div class="a" style="left:494px;top:90px;width:21px;height:21px;background:#f0f0f0;border-top:1px solid #fff;border-left:1px solid #fff;border-right:1px solid #808080;border-bottom:1px solid #808080;"></div>
<svg style="left:0;top:0" width="1" height="1"><path d="M471 104l8-9 5 4-7 9z" fill="#e0e0e0"/><path d="M472 105l3 3" stroke="#ff8080"/><path d="M480 96l5-3M484 102l2 2" stroke="#909090" stroke-dasharray="1 1"/><path d="M479 108h6" stroke="#000" stroke-dasharray="1 1"/><rect x="498" y="97" width="13" height="11" fill="url(#pk)"/><path d="M498 94.500h13" stroke="#c0c0c0" stroke-dasharray="1 1"/><path d="M500 99v8M504 99v8" stroke="#20a040" stroke-dasharray="1 1"/><path d="M506 104.500h4" stroke="#4040ff"/></svg>
<svg style="left:0px;top:120px" width="16" height="16" viewBox="0 0 16 16"><path d="M6.500 0.500h7l2 3-2 7h-8l1-6z" fill="#fff" stroke="#000"/><path d="M1 1.500h3M0.500 3.500h3M0.500 5.500h2.500M0.500 7.500h2" stroke="#7070c0"/><path d="M8 2.500h4M8 4.500h5M7.500 6.500h4M7 8.500h4" stroke="#404098"/><path d="M3.500 9l3 3-3 3-3-3z" fill="#e00030" stroke="#000"/><path d="M12.500 10l2.500 2.500-2.500 2.500-2.500-2.500z" fill="#e00030" stroke="#000"/><path d="M6 6l-2 4M13 10l1-3" stroke="#000"/><rect x="3" y="11.500" width="1" height="1" fill="#fff"/><rect x="12" y="12" width="1" height="1" fill="#fff"/></svg>
<svg style="left:165px;top:120px" width="16" height="16" viewBox="0 0 16 16"><path d="M0 6l6-6 3 3-5 4z" fill="#e020f0"/><path d="M0 6l1 2 4-1-1-1z" fill="#8000a0"/><rect x="8" y="5" width="8" height="8" fill="#10a040"/><circle cx="9" cy="5" r="3.800" fill="#10e8f8" stroke="#5080a0" stroke-width=".8"/><path d="M5 6l5 5-5 5-5-5z" fill="#0858e8"/></svg>
<svg style="left:430px;top:141px" width="16" height="16" viewBox="0 0 16 16"><path d="M0 6l6-6 3 3-5 4z" fill="#e020f0"/><path d="M0 6l1 2 4-1-1-1z" fill="#8000a0"/><rect x="8" y="5" width="8" height="8" fill="#10a040"/><circle cx="9" cy="5" r="3.800" fill="#10e8f8" stroke="#5080a0" stroke-width=".8"/><path d="M5 6l5 5-5 5-5-5z" fill="#0858e8"/></svg>
<svg style="left:165px;top:354px" width="16" height="16" viewBox="0 0 16 16"><g transform="translate(8 8)"><rect x="-1.800" y="-8" width="3.600" height="5" fill="#4878a8" transform="rotate(0)"/><rect x="-1.800" y="-8" width="3.600" height="5" fill="#4878a8" transform="rotate(45)"/><rect x="-1.800" y="-8" width="3.600" height="5" fill="#4878a8" transform="rotate(90)"/><rect x="-1.800" y="-8" width="3.600" height="5" fill="#4878a8" transform="rotate(135)"/><rect x="-1.800" y="-8" width="3.600" height="5" fill="#4878a8" transform="rotate(180)"/><rect x="-1.800" y="-8" width="3.600" height="5" fill="#4878a8" transform="rotate(225)"/><rect x="-1.800" y="-8" width="3.600" height="5" fill="#4878a8" transform="rotate(270)"/><rect x="-1.800" y="-8" width="3.600" height="5" fill="#4878a8" transform="rotate(315)"/><circle r="5.600" fill="#5888b8"/><circle r="5.600" fill="none" stroke="#386898" stroke-width="1"/><circle r="2.300" fill="#f0f0f0"/></g></svg>
<svg style="left:420px;top:121px" width="15" height="15" viewBox="0 0 15 15" shape-rendering="crispEdges"><rect x="0" y="0" width="15" height="15" fill="#000"/><rect x="0" y="0" width="14" height="14" fill="#fff"/><rect x="1" y="1" width="13" height="13" fill="#c0c0c0"/><rect x="1" y="1" width="12" height="2" fill="#fff"/><rect x="1" y="5" width="12" height="8" fill="#000"/><path d="M1 6.500h3v3h2M7 9.500v-3h3v3h3M1 10.500h3v2" fill="none" stroke="#10c040"/><path d="M5.500 5v8" stroke="#20e0f0"/><path d="M8 11.500h5" stroke="#4010e0"/></svg>
<svg style="left:509px;top:559px" width="15" height="15" viewBox="0 0 15 15" shape-rendering="crispEdges"><rect x="0" y="0" width="15" height="15" fill="#000"/><rect x="0" y="0" width="14" height="14" fill="#fff"/><rect x="1" y="1" width="13" height="13" fill="#c0c0c0"/><rect x="1" y="1" width="12" height="2" fill="#fff"/><rect x="1" y="5" width="12" height="8" fill="#000"/><path d="M1 6.500h3v3h2M7 9.500v-3h3v3h3M1 10.500h3v2" fill="none" stroke="#10c040"/><path d="M5.500 5v8" stroke="#20e0f0"/><path d="M8 11.500h5" stroke="#4010e0"/></svg>
<svg style="left:423px;top:559px" width="15" height="15" viewBox="0 0 15 15" shape-rendering="crispEdges"><rect x="0" y="0" width="15" height="15" fill="#000"/><rect x="0" y="0" width="14" height="14" fill="#fff"/><rect x="1" y="1" width="13" height="13" fill="#002890"/><rect x="1" y="1" width="13" height="13" fill="url(#pn)" opacity=".5"/><path d="M1.500 4.500h3v6h-3zM5 7.500h3v-3h5M10 13v-3h3" fill="none" stroke="#10f0ff"/><path d="M7.500 8v5" stroke="#f01010"/><path d="M7 3.500l2-2M12.500 1.500h1" stroke="#f0f010"/></svg>
<svg style="left:0px;top:558px" width="13" height="14" viewBox="3 0 13 14" shape-rendering="crispEdges"><path d="M2.500 5v8.500h13v-8.500" fill="#fff" stroke="#000"/><path d="M2 0.500h13M3 2.500h11" stroke="#101090" stroke-dasharray="1 2"/><path d="M4 10.500h11M4 12.500h11" stroke="#000" stroke-dasharray="1 1"/><path d="M4 3h2v2h2l-3 3-3-3h2zM10 3h2v2h2l-3 3-3-3h2z" fill="#000090"/></svg>
<svg style="left:77px;top:558px" width="16" height="16" viewBox="0 0 16 16"><path d="M6.500 0.500h7l2 3-2 7h-8l1-6z" fill="#fff" stroke="#000"/><path d="M1 1.500h3M0.500 3.500h3M0.500 5.500h2.500M0.500 7.500h2" stroke="#7070c0"/><path d="M8 2.500h4M8 4.500h5M7.500 6.500h4M7 8.500h4" stroke="#404098"/><path d="M3.500 9l3 3-3 3-3-3z" fill="#e00030" stroke="#000"/><path d="M12.500 10l2.500 2.500-2.500 2.500-2.500-2.500z" fill="#e00030" stroke="#000"/><path d="M6 6l-2 4M13 10l1-3" stroke="#000"/><rect x="3" y="11.500" width="1" height="1" fill="#fff"/><rect x="12" y="12" width="1" height="1" fill="#fff"/></svg>
<svg style="left:1px;top:588px" width="13" height="15" viewBox="0 0 13 15"><path d="M0 3c3-3 10-3 13 0v11l-3-2v-6h-7v6l-3 2z" fill="#908080"/><path d="M0 3c3-3 10-3 13 0v3c-3-2-10-2-13 0z" fill="#c0b8b8"/><rect x="3.500" y="3" width="6" height="4.500" fill="#fff"/><path d="M0 9v5l3-2v-4zM13 9v5l-3-2v-4z" fill="#605050"/></svg>
<svg style="left:0;top:0" width="1" height="1"><path d="M429 505l3-7 3 7M433 499l3 6 3-7" fill="none" stroke="#484848" stroke-width="1.600"/><path d="M429 506.500h10" stroke="#60a8f0" stroke-width="1.500"/><rect x="440.500" y="497.500" width="10" height="9" fill="#c8d8f0" stroke="#5090e0"/><rect x="440" y="497" width="11" height="2.500" fill="#5090e0"/><path d="M443 508l6-5" stroke="#80a8e0" stroke-width="2.500"/><circle cx="457.800" cy="502" r="5" fill="#60b848" stroke="#90d878" stroke-width="1"/><path d="M455 502h5.600M457.800 499.200v5.600" stroke="#fff" stroke-width="1.800"/><rect x="432" y="520" width="10" height="8" fill="#f0b030" stroke="#c88010" stroke-width=".8"/><path d="M434 520v-2.500c0-3 6-3 6 0" fill="none" stroke="#b0b0b0" stroke-width="1.400"/><rect x="435" y="523" width="4" height="2.500" fill="#fff0c0"/><path d="M445 527l6-6" stroke="#5088e0" stroke-width="3.200" stroke-linecap="round"/><path d="M451 521l2-3M452 516.500c2-1 3 0 2.500 2.500" fill="none" stroke="#c8c8c8" stroke-width="1.800"/><circle cx="462" cy="521" r="5" fill="#e84848" stroke="#f09090" stroke-width="1"/><path d="M459.200 521h5.600" stroke="#fff" stroke-width="2"/></svg>
</body></html>
